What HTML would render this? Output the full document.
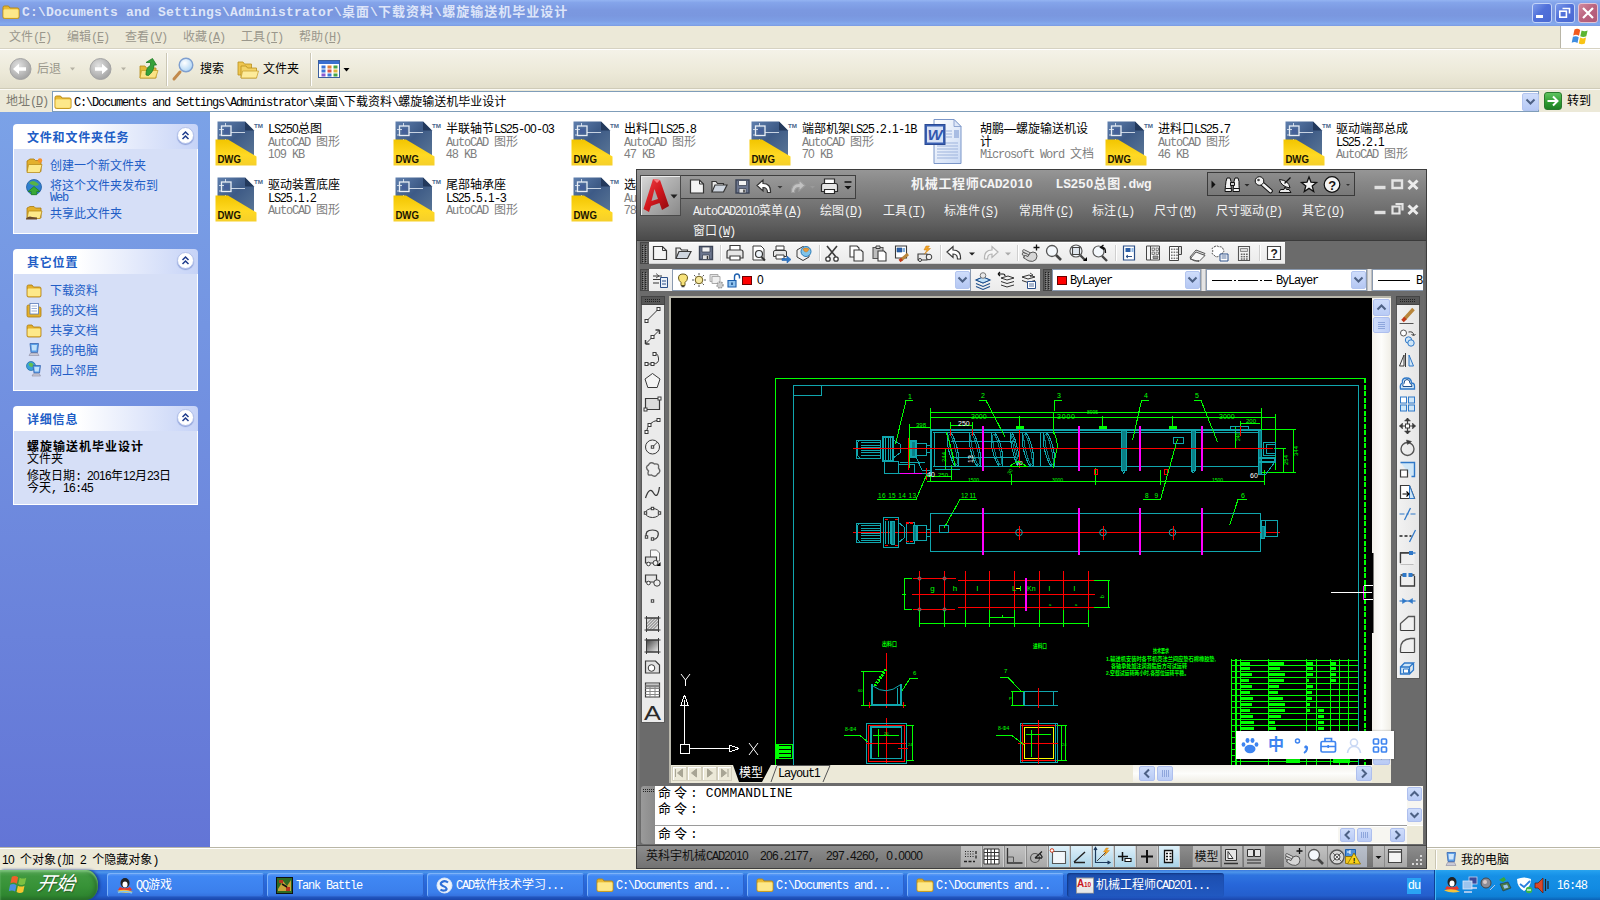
<!DOCTYPE html>
<html lang="zh-CN">
<head>
<meta charset="utf-8">
<title>螺旋输送机毕业设计</title>
<style>
*{box-sizing:border-box;margin:0;padding:0}
html,body{width:1600px;height:900px;overflow:hidden;background:#fff}
body{font-family:"Liberation Sans","Noto Sans CJK SC",sans-serif;font-size:12px;color:#000;position:relative;line-height:14px}
.a{position:absolute}
.t{position:absolute;white-space:pre;line-height:14px}
.m{font-family:"Liberation Mono","Noto Sans CJK SC",monospace}
.d{font-family:"Liberation Sans","Noto Sans CJK SC",sans-serif}
u{text-decoration:underline;text-underline-offset:1px}
svg{position:absolute;overflow:visible}
svg text{font-family:"Liberation Sans","Noto Sans CJK SC",sans-serif}
/* explorer */
#xtitle{left:0;top:0;width:1600px;height:26px;background:linear-gradient(#94b4f2 0,#84a4ea 10%,#7b98e0 40%,#7a97df 60%,#7d9ee5 80%,#84aaee 92%,#7b9ae2 100%)}
.cb{position:absolute;top:3px;width:20px;height:20px;border:1px solid #c3d4f8;border-radius:3px;background:linear-gradient(135deg,#7d9bea 0,#5171da 45%,#4a69d2 100%)}
#xmenu{left:0;top:26px;width:1600px;height:23px;background:#ece9d8;border-bottom:1px solid #d6d2c2}
#xflag{left:1560px;top:26px;width:40px;height:22px;background:#fff;border-left:1px solid #b8b5a6}
#xtool{left:0;top:49px;width:1600px;height:40px;background:linear-gradient(#f4f2e8,#ece9d8 60%,#e3dfcc);border-top:1px solid #fff;border-bottom:1px solid #cfcbb8}
#xaddr{left:0;top:89px;width:1600px;height:23px;background:#ece9d8;border-top:1px solid #fbfaf5}
#xaddrbox{left:52px;top:91px;width:1487px;height:21px;background:#fff;border:1px solid #7f9db9}
#xleft{left:0;top:112px;width:210px;height:735px;background:linear-gradient(#7ba2e7,#6375d6)}
#xmain{left:210px;top:112px;width:1390px;height:735px;background:#fff}
#xstatus{left:0;top:847px;width:1600px;height:23px;background:#ece9d8;border-top:1px solid #b9b6a6;box-shadow:inset 0 1px 0 #fff}
/* task panes */
.ph{position:absolute;left:13px;width:185px;height:25px;border-radius:4px 4px 0 0;background:linear-gradient(90deg,#fff 0,#fff 35%,#c6d3f7 100%)}
.pb{position:absolute;left:13px;width:185px;background:#d6dff7;border:1px solid #fff;border-top:none}
.chev{position:absolute;left:164px;top:3px;width:17px;height:17px;border-radius:50%;background:#fff;border:1px solid #b4c2ea;box-shadow:0 1px 1px #8ea1d9}
/* taskbar */
#tb{left:0;top:870px;width:1600px;height:30px;background:linear-gradient(#3a78de 0,#4d96ea 7%,#2e74e0 17%,#2766d9 50%,#245fcd 85%,#1b46ab 100%)}
.tbb{position:absolute;top:873px;height:24px;border-radius:3px;background:linear-gradient(#66a2f7 0,#4088f4 14%,#3b7fec 80%,#336fdd 100%);box-shadow:inset 1px 1px 0 #7db3fa,inset -1px -1px 0 #2c62cb}
.tbb.act{background:linear-gradient(#1b4dab 0,#1e52b6 40%,#2159c1 100%);box-shadow:inset 1px 1px 2px #113682}
#tray{left:1434px;top:870px;width:166px;height:30px;background:linear-gradient(#2aa4ee 0,#1f9bed 8%,#1690e6 20%,#128be2 60%,#0f80d6 88%,#0b62b6 100%);border-left:1px solid #0e3f94;box-shadow:inset 1px 0 0 #45b8f5}
</style>
</head>
<body>
<!-- explorer -->
<div class="a" id="xtitle"></div>
<svg style="left:2px;top:4px" width="18" height="16" viewBox="0 0 18 16"><path d="M1 3.5Q1 2 2.5 2H6.5L8 4H15.5Q17 4 17 5.5V13Q17 14.5 15.5 14.5H2.5Q1 14.5 1 13Z" fill="#e8b830" stroke="#b98a14" stroke-width="1"/><path d="M1.6 6.5Q1.6 5.3 3 5.3H15Q16.4 5.3 16.4 6.5V12.8Q16.4 13.9 15 13.9H3Q1.6 13.9 1.6 12.8Z" fill="#fde88a" stroke="#f7d55c" stroke-width=".6"/></svg>
<div class="t" style="left:22px;top:5px;font-size:13px;color:#dde5f9;font-weight:bold;"><span class="m" style="letter-spacing:0.20px">C:\Documents and Settings\Administrator\</span><span style="letter-spacing:1.00px">桌面</span><span class="m" style="letter-spacing:0.20px">\</span><span style="letter-spacing:1.00px">下载资料</span><span class="m" style="letter-spacing:0.20px">\</span><span style="letter-spacing:1.00px">螺旋输送机毕业设计</span></div>
<div class="cb" style="left:1532px"></div><div class="cb" style="left:1555px"></div><div class="cb" style="left:1578px;background:linear-gradient(135deg,#d28a9e 0,#b9627e 50%,#b05a78 100%);border-color:#e3c3d3"></div>
<svg style="left:0;top:0" width="1600" height="26" viewBox="0 0 1600 26"><rect x="1536" y="15" width="7" height="3" fill="#fff"/><path d="M1562.5 8.5h7v5" fill="none" stroke="#fff" stroke-width="1.6"/><rect x="1559.8" y="11.2" width="6.6" height="6" fill="none" stroke="#fff" stroke-width="1.6"/><path d="M1583 8l10 10M1593 8l-10 10" stroke="#fff" stroke-width="2.2"/></svg>
<div class="a" id="xmenu"></div>
<div class="t" style="left:9px;top:30px;color:#9a978c;">文件<span class="m" style="letter-spacing:-1.20px">(<u>F</u>)</span></div>
<div class="t" style="left:67px;top:30px;color:#9a978c;">编辑<span class="m" style="letter-spacing:-1.20px">(<u>E</u>)</span></div>
<div class="t" style="left:125px;top:30px;color:#9a978c;">查看<span class="m" style="letter-spacing:-1.20px">(<u>V</u>)</span></div>
<div class="t" style="left:183px;top:30px;color:#9a978c;">收藏<span class="m" style="letter-spacing:-1.20px">(<u>A</u>)</span></div>
<div class="t" style="left:241px;top:30px;color:#9a978c;">工具<span class="m" style="letter-spacing:-1.20px">(<u>T</u>)</span></div>
<div class="t" style="left:299px;top:30px;color:#9a978c;">帮助<span class="m" style="letter-spacing:-1.20px">(<u>H</u>)</span></div>
<div class="a" id="xflag"></div>
<svg style="left:1571px;top:27px" width="20" height="20" viewBox="0 0 20 20"><path d="M3.5 2.5Q6.5 1 9.2 3L8 8.8Q5.2 7 2.2 8.5Z" fill="#f25a1d"/><path d="M10.6 3.4Q13.5 5 16.6 3.4L15.3 9.2Q12.2 10.8 9.3 9.2Z" fill="#5cb531"/><path d="M1.9 9.8Q5 8.3 7.7 10.2L6.5 16Q3.6 14.2 .7 15.7Z" fill="#3f8de0"/><path d="M9 10.6Q12 12.2 15 10.6L13.8 16.4Q10.8 18 7.8 16.4Z" fill="#f9c414"/></svg>
<div class="a" id="xtool"></div>
<svg style="left:0;top:49px" width="420" height="40" viewBox="0 49 420 40"><defs><radialGradient id="gb" cx=".4" cy=".35" r=".7"><stop offset="0" stop-color="#e2e2e2"/><stop offset="1" stop-color="#9e9e9e"/></radialGradient><radialGradient id="lens" cx=".4" cy=".35" r=".7"><stop offset="0" stop-color="#fff"/><stop offset="1" stop-color="#a9d2f5"/></radialGradient></defs><circle cx="20.5" cy="69" r="10.5" fill="url(#gb)" stroke="#a4a4a4"/><path d="M26 67.2h-7v-3.4l-6 5.2 6 5.2v-3.4h7z" fill="#fff"/><path d="M70 67.5h5l-2.5 3z" fill="#b5b2a4"/><circle cx="100.5" cy="69" r="10.5" fill="url(#gb)" stroke="#a4a4a4"/><path d="M95 67.2h7v-3.4l6 5.2-6 5.2v-3.4h-7z" fill="#fff"/><path d="M121 67.5h5l-2.5 3z" fill="#b5b2a4"/><path d="M140 66h5l1.5 2h9.5v10h-16z" fill="#e6b93a" stroke="#b48a1a" stroke-width=".8"/><path d="M141.5 70.5h16.5l-2.5 7.5h-15.5z" fill="#fbe385" stroke="#c79f2a" stroke-width=".8"/><path d="M146 73c0-6 2-8.5 4.5-9.5v-3l-4.5 0 6.500-4 4 6.500h-2.500c0 5-2.500 8-5.500 10.500z" transform="translate(0 2)" fill="#36a23a" stroke="#1f7a25" stroke-width=".8"/><path d="M166.500 53v33" stroke="#cbc7b5"/><path d="M167.500 53v33" stroke="#fff"/><path d="M174 79l6-7" stroke="#c28a4c" stroke-width="3" stroke-linecap="round"/><circle cx="186" cy="65" r="6.8" fill="url(#lens)" stroke="#7f9fcf" stroke-width="1.4"/><path d="M238 62h5l1.500 2h7v11h-13.500z" fill="#eec650" stroke="#b9901f" stroke-width=".8"/><path d="M241 66h5l1.500 2h9v10h-15.500z" fill="#f3d367" stroke="#b9901f" stroke-width=".8"/><path d="M242.500 71h16l-2 7h-15.500z" fill="#fdeb9b" stroke="#c9a232" stroke-width=".8"/><path d="M310.500 53v33" stroke="#cbc7b5"/><path d="M311.500 53v33" stroke="#fff"/><rect x="318.500" y="60.500" width="21" height="17" fill="#fff" stroke="#3b5f9e"/><rect x="319" y="61" width="20" height="3" fill="#3a6fd0"/><rect x="321.5" y="65.5" width="4" height="3" fill="#3d76d8"/><rect x="327.5" y="65.5" width="4" height="3" fill="#e2803a"/><rect x="333.5" y="65.5" width="4" height="3" fill="#47a447"/><rect x="321.5" y="69.5" width="4" height="3" fill="#3d76d8"/><rect x="327.5" y="69.5" width="4" height="3" fill="#d9534f"/><rect x="333.5" y="69.5" width="4" height="3" fill="#e2b53a"/><rect x="321.5" y="73.5" width="4" height="3" fill="#8a5ad0"/><rect x="327.5" y="73.5" width="4" height="3" fill="#3d76d8"/><rect x="333.5" y="73.5" width="4" height="3" fill="#47a447"/><path d="M343.500 68h6l-3 3.500z" fill="#000"/></svg>
<div class="t" style="left:37px;top:62px;color:#9a978c;">后退</div>
<div class="t" style="left:200px;top:62px;">搜索</div>
<div class="t" style="left:263px;top:62px;">文件夹</div>
<div class="a" id="xaddr"></div><div class="a" id="xaddrbox"></div>
<div class="t" style="left:6px;top:94px;color:#7b796f;">地址<span class="m" style="letter-spacing:-1.20px">(<u>D</u>)</span></div>
<svg style="left:54px;top:93.5px" width="18" height="16" viewBox="0 0 18 16"><path d="M1 3.5Q1 2 2.5 2H6.5L8 4H15.5Q17 4 17 5.5V13Q17 14.5 15.5 14.5H2.5Q1 14.5 1 13Z" fill="#e8b830" stroke="#b98a14" stroke-width="1"/><path d="M1.6 6.5Q1.6 5.3 3 5.3H15Q16.4 5.3 16.4 6.5V12.8Q16.4 13.9 15 13.9H3Q1.6 13.9 1.6 12.8Z" fill="#fde88a" stroke="#f7d55c" stroke-width=".6"/></svg>
<div class="t" style="left:74px;top:95px;"><span class="m" style="letter-spacing:-1.20px">C:\Documents and Settings\Administrator\</span>桌面<span class="m" style="letter-spacing:-1.20px">\</span>下载资料<span class="m" style="letter-spacing:-1.20px">\</span>螺旋输送机毕业设计</div>
<div class="a" style="left:1522px;top:92.5px;width:17px;height:18px;background:linear-gradient(#cfddfb,#b6c9f5);border:1px solid #b3c5ef;border-radius:2px"></div>
<svg style="left:1522px;top:92px" width="17" height="19" viewBox="0 0 17 19"><path d="M4.500 7.500l4 4 4-4" fill="none" stroke="#4d6185" stroke-width="2"/></svg>
<div class="a" style="left:1544px;top:92px;width:18px;height:18px;background:linear-gradient(#5fc35f,#2d9a30 60%,#1f7f26);border:1px solid #2a7a2d;border-radius:3px"></div>
<svg style="left:1544px;top:92px" width="18" height="18" viewBox="0 0 18 18"><path d="M3.500 9h9M9 4.500l4.500 4.500-4.500 4.500" fill="none" stroke="#fff" stroke-width="2"/></svg>
<div class="t" style="left:1567px;top:94px;">转到</div>
<div class="a" id="xleft"></div><div class="a" id="xmain"></div><div class="a" id="xstatus"></div>
<div class="t" style="left:2px;top:852.5px;"><span class="d" style="letter-spacing:-0.67px">10</span><span class="m" style="letter-spacing:-1.20px"> </span>个对象<span class="m" style="letter-spacing:-1.20px">(</span>加<span class="m" style="letter-spacing:-1.20px"> </span><span class="d" style="letter-spacing:-0.67px">2</span><span class="m" style="letter-spacing:-1.20px"> </span>个隐藏对象<span class="m" style="letter-spacing:-1.20px">)</span></div>
<!-- leftpane -->
<div class="ph" style="top:124px"><div class="chev"><svg style="left:0;top:0" width="15" height="15" viewBox="0 0 15 15"><path d="M4.500 7l3-3 3 3M4.500 11l3-3 3 3" fill="none" stroke="#1f3c8c" stroke-width="1.500"/></svg></div></div>
<div class="pb" style="top:149px;height:85px"></div>
<div class="t" style="left:27px;top:130.5px;color:#215dc6;font-weight:bold;"><span style="letter-spacing:0.80px">文件和文件夹任务</span></div>
<div class="t" style="left:50px;top:158.5px;color:#215dc6;">创建一个新文件夹</div>
<div class="t" style="left:50px;top:178.5px;color:#215dc6;">将这个文件夹发布到</div>
<div class="t" style="left:50px;top:190px;color:#215dc6;"><span class="m" style="letter-spacing:-1.20px">Web</span></div>
<div class="t" style="left:50px;top:206.5px;color:#215dc6;">共享此文件夹</div>
<div class="ph" style="top:249px"><div class="chev"><svg style="left:0;top:0" width="15" height="15" viewBox="0 0 15 15"><path d="M4.500 7l3-3 3 3M4.500 11l3-3 3 3" fill="none" stroke="#1f3c8c" stroke-width="1.500"/></svg></div></div>
<div class="pb" style="top:274px;height:117px"></div>
<div class="t" style="left:27px;top:255.5px;color:#215dc6;font-weight:bold;"><span style="letter-spacing:0.80px">其它位置</span></div>
<div class="t" style="left:50px;top:283.5px;color:#215dc6;">下载资料</div>
<div class="t" style="left:50px;top:303.5px;color:#215dc6;">我的文档</div>
<div class="t" style="left:50px;top:323.5px;color:#215dc6;">共享文档</div>
<div class="t" style="left:50px;top:343.5px;color:#215dc6;">我的电脑</div>
<div class="t" style="left:50px;top:363.5px;color:#215dc6;">网上邻居</div>
<div class="ph" style="top:406px"><div class="chev"><svg style="left:0;top:0" width="15" height="15" viewBox="0 0 15 15"><path d="M4.500 7l3-3 3 3M4.500 11l3-3 3 3" fill="none" stroke="#1f3c8c" stroke-width="1.500"/></svg></div></div>
<div class="pb" style="top:431px;height:74px"></div>
<div class="t" style="left:27px;top:413px;color:#215dc6;font-weight:bold;"><span style="letter-spacing:0.80px">详细信息</span></div>
<div class="t" style="left:27px;top:439.5px;font-weight:bold;"><span style="letter-spacing:1.00px">螺旋输送机毕业设计</span></div>
<div class="t" style="left:27px;top:452px;">文件夹</div>
<div class="t" style="left:27px;top:468.5px;">修改日期<span class="m" style="letter-spacing:-1.20px">: </span><span class="d" style="letter-spacing:-0.67px">2016</span>年<span class="d" style="letter-spacing:-0.67px">12</span>月<span class="d" style="letter-spacing:-0.67px">23</span>日</div>
<div class="t" style="left:27px;top:481px;">今天<span class="m" style="letter-spacing:-1.20px">, </span><span class="d" style="letter-spacing:-0.67px">16</span><span class="m" style="letter-spacing:-1.20px">:</span><span class="d" style="letter-spacing:-0.67px">45</span></div>
<svg style="left:0;top:0" width="210" height="520" viewBox="0 0 210 520"><path d="M27 161l3-2h4l1.500 1.500h5.500v11h-14z" fill="#e3b02c" stroke="#a97a10" stroke-width=".8"/><path d="M28.500 164.500h13.500l-2 8h-13z" fill="#fde98a" stroke="#b98d1c" stroke-width=".8"/><circle cx="40" cy="160.500" r="2.200" fill="#f8912a"/><circle cx="34" cy="187" r="7.500" fill="#2f7fd0" stroke="#1d5aa0" stroke-width=".8"/><path d="M29 183q3-3 6-1.500t4 3q-2 2-5 1t-5-2.500z" fill="#58b347"/><path d="M34 186.500l6 5h-3.200v3.200h-5.600v-3.200h-3.200z" fill="#39a935" stroke="#1f7a1f" stroke-width=".7"/><path d="M27 208l3-1.500h4l1.500 1.500h5.500v10h-14z" fill="#e3b02c" stroke="#a97a10" stroke-width=".8"/><path d="M28.500 211h13.500l-2 7.500h-13z" fill="#fde98a" stroke="#b98d1c" stroke-width=".8"/><path d="M26 218.500q3-3 6-1.500l5 .5v2h-11z" fill="#6a4a2a"/><path d="M27 286.500q0-1.500 1.500-1.500h3.500l1.500 2h6q1.500 0 1.500 1.500v7q0 1.500-1.500 1.500h-11q-1.500 0-1.500-1.500z" fill="#e3b02c" stroke="#a97a10" stroke-width=".8"/><rect x="27.600" y="288.500" width="12.800" height="7.800" rx="1.200" fill="#fde98a"/><path d="M27 306.500q0-1.500 1.500-1.500h3.500l1.500 2h6q1.500 0 1.500 1.500v7q0 1.500-1.500 1.500h-11q-1.500 0-1.500-1.500z" fill="#e3b02c" stroke="#a97a10" stroke-width=".8"/><rect x="30" y="303.500" width="8.500" height="10.500" fill="#fff" stroke="#5a7ab8" stroke-width=".8"/><path d="M31.500 306h5.500M31.500 308.500h5.500M31.500 311h5.500" stroke="#7d9ad0" stroke-width=".8"/><path d="M27 326.500q0-1.500 1.500-1.500h3.500l1.500 2h6q1.500 0 1.500 1.500v7q0 1.500-1.500 1.500h-11q-1.500 0-1.500-1.500z" fill="#e3b02c" stroke="#a97a10" stroke-width=".8"/><rect x="27.600" y="328.500" width="12.800" height="7.800" rx="1.200" fill="#fde98a"/><path d="M30 343.500h8.500l-1 9h-6.500z" fill="#5aa0e8" stroke="#3a66b0" stroke-width=".8"/><path d="M31.500 345h5.500l-.7 5.500h-4.300z" fill="#bfe0fb"/><path d="M29 355.500h10l-1.500-2.500h-7z" fill="#c9c9d6" stroke="#8a8aa0" stroke-width=".6"/><circle cx="31" cy="366" r="4.500" fill="#3aa0d8" stroke="#1f6aa0" stroke-width=".7"/><path d="M28.500 364q2-2 4-.5t1 3q-2 1-4-.5z" fill="#62c050"/><path d="M33 365.500h7.500l-1 7.500h-5.500z" fill="#5aa0e8" stroke="#3a66b0" stroke-width=".8"/><path d="M34.300 367h5l-.6 4.500h-3.800z" fill="#bfe0fb"/><path d="M32 376h8.500l-1.200-2.200h-6z" fill="#c9c9d6" stroke="#8a8aa0" stroke-width=".6"/></svg>
<!-- files -->
<svg style="left:215px;top:120px" width="50" height="48" viewBox="0 0 50 48"><defs><linearGradient id="dwgb" x1="0" y1="0" x2="1" y2="1"><stop offset="0" stop-color="#5f7fae"/><stop offset=".45" stop-color="#3d5a86"/><stop offset="1" stop-color="#5c7897"/></linearGradient><linearGradient id="dwgy" x1="0" y1="0" x2="0" y2="1"><stop offset="0" stop-color="#f2c500"/><stop offset=".6" stop-color="#ffd923"/><stop offset="1" stop-color="#f5cf2a"/></linearGradient></defs><path d="M2.500 1.500H30L39 10.500V40H2.500Z" fill="url(#dwgb)"/><path d="M30 1.500L39 10.500H30Z" fill="#23395c"/><path d="M4 9.500h6M10.500 3v3M4 15h3M10.500 19v7M16 12.500h14" stroke="#dfe7f2" stroke-width="1" fill="none" opacity=".85"/><rect x="6.500" y="6" width="9.500" height="9.500" fill="none" stroke="#e9eef6" stroke-width="1.300"/><rect x="9" y="8.500" width="5" height="5" fill="#45609a"/><path d="M.500 19.500H13L41.500 36.500V45.500H.500Z" fill="url(#dwgy)"/><text x="2.400" y="43" font-size="11" font-weight="bold" fill="#1a1400" textLength="23.500" lengthAdjust="spacingAndGlyphs">DWG</text><text x="39" y="7.500" font-size="6" font-weight="bold" fill="#46648a" textLength="9" lengthAdjust="spacingAndGlyphs">TM</text></svg>
<div class="t" style="left:268px;top:122px;"><span class="m" style="letter-spacing:-1.20px">LS</span><span class="d" style="letter-spacing:-0.67px">250</span>总图</div>
<div class="t" style="left:268px;top:134.5px;color:#808080;"><span class="m" style="letter-spacing:-1.20px">AutoCAD </span>图形</div>
<div class="t" style="left:268px;top:147px;color:#808080;"><span class="d" style="letter-spacing:-0.67px">109</span><span class="m" style="letter-spacing:-1.20px"> KB</span></div>
<svg style="left:393px;top:120px" width="50" height="48" viewBox="0 0 50 48"><defs><linearGradient id="dwgb" x1="0" y1="0" x2="1" y2="1"><stop offset="0" stop-color="#5f7fae"/><stop offset=".45" stop-color="#3d5a86"/><stop offset="1" stop-color="#5c7897"/></linearGradient><linearGradient id="dwgy" x1="0" y1="0" x2="0" y2="1"><stop offset="0" stop-color="#f2c500"/><stop offset=".6" stop-color="#ffd923"/><stop offset="1" stop-color="#f5cf2a"/></linearGradient></defs><path d="M2.500 1.500H30L39 10.500V40H2.500Z" fill="url(#dwgb)"/><path d="M30 1.500L39 10.500H30Z" fill="#23395c"/><path d="M4 9.500h6M10.500 3v3M4 15h3M10.500 19v7M16 12.500h14" stroke="#dfe7f2" stroke-width="1" fill="none" opacity=".85"/><rect x="6.500" y="6" width="9.500" height="9.500" fill="none" stroke="#e9eef6" stroke-width="1.300"/><rect x="9" y="8.500" width="5" height="5" fill="#45609a"/><path d="M.500 19.500H13L41.500 36.500V45.500H.500Z" fill="url(#dwgy)"/><text x="2.400" y="43" font-size="11" font-weight="bold" fill="#1a1400" textLength="23.500" lengthAdjust="spacingAndGlyphs">DWG</text><text x="39" y="7.500" font-size="6" font-weight="bold" fill="#46648a" textLength="9" lengthAdjust="spacingAndGlyphs">TM</text></svg>
<div class="t" style="left:446px;top:122px;">半联轴节<span class="m" style="letter-spacing:-1.20px">LS</span><span class="d" style="letter-spacing:-0.67px">25</span><span class="m" style="letter-spacing:-1.20px">-</span><span class="d" style="letter-spacing:-0.67px">00</span><span class="m" style="letter-spacing:-1.20px">-</span><span class="d" style="letter-spacing:-0.67px">03</span></div>
<div class="t" style="left:446px;top:134.5px;color:#808080;"><span class="m" style="letter-spacing:-1.20px">AutoCAD </span>图形</div>
<div class="t" style="left:446px;top:147px;color:#808080;"><span class="d" style="letter-spacing:-0.67px">48</span><span class="m" style="letter-spacing:-1.20px"> KB</span></div>
<svg style="left:571px;top:120px" width="50" height="48" viewBox="0 0 50 48"><defs><linearGradient id="dwgb" x1="0" y1="0" x2="1" y2="1"><stop offset="0" stop-color="#5f7fae"/><stop offset=".45" stop-color="#3d5a86"/><stop offset="1" stop-color="#5c7897"/></linearGradient><linearGradient id="dwgy" x1="0" y1="0" x2="0" y2="1"><stop offset="0" stop-color="#f2c500"/><stop offset=".6" stop-color="#ffd923"/><stop offset="1" stop-color="#f5cf2a"/></linearGradient></defs><path d="M2.500 1.500H30L39 10.500V40H2.500Z" fill="url(#dwgb)"/><path d="M30 1.500L39 10.500H30Z" fill="#23395c"/><path d="M4 9.500h6M10.500 3v3M4 15h3M10.500 19v7M16 12.500h14" stroke="#dfe7f2" stroke-width="1" fill="none" opacity=".85"/><rect x="6.500" y="6" width="9.500" height="9.500" fill="none" stroke="#e9eef6" stroke-width="1.300"/><rect x="9" y="8.500" width="5" height="5" fill="#45609a"/><path d="M.500 19.500H13L41.500 36.500V45.500H.500Z" fill="url(#dwgy)"/><text x="2.400" y="43" font-size="11" font-weight="bold" fill="#1a1400" textLength="23.500" lengthAdjust="spacingAndGlyphs">DWG</text><text x="39" y="7.500" font-size="6" font-weight="bold" fill="#46648a" textLength="9" lengthAdjust="spacingAndGlyphs">TM</text></svg>
<div class="t" style="left:624px;top:122px;">出料口<span class="m" style="letter-spacing:-1.20px">LS</span><span class="d" style="letter-spacing:-0.67px">25</span><span class="m" style="letter-spacing:-1.20px">.</span><span class="d" style="letter-spacing:-0.67px">8</span></div>
<div class="t" style="left:624px;top:134.5px;color:#808080;"><span class="m" style="letter-spacing:-1.20px">AutoCAD </span>图形</div>
<div class="t" style="left:624px;top:147px;color:#808080;"><span class="d" style="letter-spacing:-0.67px">47</span><span class="m" style="letter-spacing:-1.20px"> KB</span></div>
<svg style="left:749px;top:120px" width="50" height="48" viewBox="0 0 50 48"><defs><linearGradient id="dwgb" x1="0" y1="0" x2="1" y2="1"><stop offset="0" stop-color="#5f7fae"/><stop offset=".45" stop-color="#3d5a86"/><stop offset="1" stop-color="#5c7897"/></linearGradient><linearGradient id="dwgy" x1="0" y1="0" x2="0" y2="1"><stop offset="0" stop-color="#f2c500"/><stop offset=".6" stop-color="#ffd923"/><stop offset="1" stop-color="#f5cf2a"/></linearGradient></defs><path d="M2.500 1.500H30L39 10.500V40H2.500Z" fill="url(#dwgb)"/><path d="M30 1.500L39 10.500H30Z" fill="#23395c"/><path d="M4 9.500h6M10.500 3v3M4 15h3M10.500 19v7M16 12.500h14" stroke="#dfe7f2" stroke-width="1" fill="none" opacity=".85"/><rect x="6.500" y="6" width="9.500" height="9.500" fill="none" stroke="#e9eef6" stroke-width="1.300"/><rect x="9" y="8.500" width="5" height="5" fill="#45609a"/><path d="M.500 19.500H13L41.500 36.500V45.500H.500Z" fill="url(#dwgy)"/><text x="2.400" y="43" font-size="11" font-weight="bold" fill="#1a1400" textLength="23.500" lengthAdjust="spacingAndGlyphs">DWG</text><text x="39" y="7.500" font-size="6" font-weight="bold" fill="#46648a" textLength="9" lengthAdjust="spacingAndGlyphs">TM</text></svg>
<div class="t" style="left:802px;top:122px;">端部机架<span class="m" style="letter-spacing:-1.20px">LS</span><span class="d" style="letter-spacing:-0.67px">25</span><span class="m" style="letter-spacing:-1.20px">.</span><span class="d" style="letter-spacing:-0.67px">2</span><span class="m" style="letter-spacing:-1.20px">.</span><span class="d" style="letter-spacing:-0.67px">1</span><span class="m" style="letter-spacing:-1.20px">-</span><span class="d" style="letter-spacing:-0.67px">1</span><span class="m" style="letter-spacing:-1.20px">B</span></div>
<div class="t" style="left:802px;top:134.5px;color:#808080;"><span class="m" style="letter-spacing:-1.20px">AutoCAD </span>图形</div>
<div class="t" style="left:802px;top:147px;color:#808080;"><span class="d" style="letter-spacing:-0.67px">70</span><span class="m" style="letter-spacing:-1.20px"> KB</span></div>
<svg style="left:924px;top:118px" width="50" height="48" viewBox="0 0 50 48"><defs><linearGradient id="wpg" x1="0" y1="0" x2="1" y2="1"><stop offset="0" stop-color="#fff"/><stop offset="1" stop-color="#c9d9f4"/></linearGradient></defs><path d="M10 1.500H30L37 8.500V45.500H10Z" fill="url(#wpg)" stroke="#7b96c8" stroke-width="1"/><path d="M30 1.500V8.500H37Z" fill="#dfe8f8" stroke="#7b96c8" stroke-width=".8"/><path d="M22 13h6M22 16h6M22 19h6M13 28h21M13 31h21M13 34h21M13 37h21M13 40h21M13 25h21" stroke="#9db3dc" stroke-width="1"/><rect x="30" y="12" width="5" height="8" fill="#a9bde3"/><rect x="1" y="6.500" width="20" height="20" fill="#3a60b4" stroke="#2a4a94" stroke-width="1"/><rect x="3" y="8.500" width="16" height="16" fill="#d7e2f6"/><text x="3.500" y="22" font-size="15" font-weight="bold" font-style="italic" fill="#3358ae" textLength="15" lengthAdjust="spacingAndGlyphs">W</text></svg>
<div class="t" style="left:980px;top:122px;">胡鹏—螺旋输送机设</div>
<div class="t" style="left:980px;top:134.5px;">计</div>
<div class="t" style="left:980px;top:147px;color:#808080;"><span class="m" style="letter-spacing:-1.20px">Microsoft Word </span>文档</div>
<svg style="left:1105px;top:120px" width="50" height="48" viewBox="0 0 50 48"><defs><linearGradient id="dwgb" x1="0" y1="0" x2="1" y2="1"><stop offset="0" stop-color="#5f7fae"/><stop offset=".45" stop-color="#3d5a86"/><stop offset="1" stop-color="#5c7897"/></linearGradient><linearGradient id="dwgy" x1="0" y1="0" x2="0" y2="1"><stop offset="0" stop-color="#f2c500"/><stop offset=".6" stop-color="#ffd923"/><stop offset="1" stop-color="#f5cf2a"/></linearGradient></defs><path d="M2.500 1.500H30L39 10.500V40H2.500Z" fill="url(#dwgb)"/><path d="M30 1.500L39 10.500H30Z" fill="#23395c"/><path d="M4 9.500h6M10.500 3v3M4 15h3M10.500 19v7M16 12.500h14" stroke="#dfe7f2" stroke-width="1" fill="none" opacity=".85"/><rect x="6.500" y="6" width="9.500" height="9.500" fill="none" stroke="#e9eef6" stroke-width="1.300"/><rect x="9" y="8.500" width="5" height="5" fill="#45609a"/><path d="M.500 19.500H13L41.500 36.500V45.500H.500Z" fill="url(#dwgy)"/><text x="2.400" y="43" font-size="11" font-weight="bold" fill="#1a1400" textLength="23.500" lengthAdjust="spacingAndGlyphs">DWG</text><text x="39" y="7.500" font-size="6" font-weight="bold" fill="#46648a" textLength="9" lengthAdjust="spacingAndGlyphs">TM</text></svg>
<div class="t" style="left:1158px;top:122px;">进料口<span class="m" style="letter-spacing:-1.20px">LS</span><span class="d" style="letter-spacing:-0.67px">25</span><span class="m" style="letter-spacing:-1.20px">.</span><span class="d" style="letter-spacing:-0.67px">7</span></div>
<div class="t" style="left:1158px;top:134.5px;color:#808080;"><span class="m" style="letter-spacing:-1.20px">AutoCAD </span>图形</div>
<div class="t" style="left:1158px;top:147px;color:#808080;"><span class="d" style="letter-spacing:-0.67px">46</span><span class="m" style="letter-spacing:-1.20px"> KB</span></div>
<svg style="left:1283px;top:120px" width="50" height="48" viewBox="0 0 50 48"><defs><linearGradient id="dwgb" x1="0" y1="0" x2="1" y2="1"><stop offset="0" stop-color="#5f7fae"/><stop offset=".45" stop-color="#3d5a86"/><stop offset="1" stop-color="#5c7897"/></linearGradient><linearGradient id="dwgy" x1="0" y1="0" x2="0" y2="1"><stop offset="0" stop-color="#f2c500"/><stop offset=".6" stop-color="#ffd923"/><stop offset="1" stop-color="#f5cf2a"/></linearGradient></defs><path d="M2.500 1.500H30L39 10.500V40H2.500Z" fill="url(#dwgb)"/><path d="M30 1.500L39 10.500H30Z" fill="#23395c"/><path d="M4 9.500h6M10.500 3v3M4 15h3M10.500 19v7M16 12.500h14" stroke="#dfe7f2" stroke-width="1" fill="none" opacity=".85"/><rect x="6.500" y="6" width="9.500" height="9.500" fill="none" stroke="#e9eef6" stroke-width="1.300"/><rect x="9" y="8.500" width="5" height="5" fill="#45609a"/><path d="M.500 19.500H13L41.500 36.500V45.500H.500Z" fill="url(#dwgy)"/><text x="2.400" y="43" font-size="11" font-weight="bold" fill="#1a1400" textLength="23.500" lengthAdjust="spacingAndGlyphs">DWG</text><text x="39" y="7.500" font-size="6" font-weight="bold" fill="#46648a" textLength="9" lengthAdjust="spacingAndGlyphs">TM</text></svg>
<div class="t" style="left:1336px;top:122px;">驱动端部总成</div>
<div class="t" style="left:1336px;top:134.5px;"><span class="m" style="letter-spacing:-1.20px">LS</span><span class="d" style="letter-spacing:-0.67px">25</span><span class="m" style="letter-spacing:-1.20px">.</span><span class="d" style="letter-spacing:-0.67px">2</span><span class="m" style="letter-spacing:-1.20px">.</span><span class="d" style="letter-spacing:-0.67px">1</span></div>
<div class="t" style="left:1336px;top:147px;color:#808080;"><span class="m" style="letter-spacing:-1.20px">AutoCAD </span>图形</div>
<svg style="left:215px;top:176px" width="50" height="48" viewBox="0 0 50 48"><defs><linearGradient id="dwgb" x1="0" y1="0" x2="1" y2="1"><stop offset="0" stop-color="#5f7fae"/><stop offset=".45" stop-color="#3d5a86"/><stop offset="1" stop-color="#5c7897"/></linearGradient><linearGradient id="dwgy" x1="0" y1="0" x2="0" y2="1"><stop offset="0" stop-color="#f2c500"/><stop offset=".6" stop-color="#ffd923"/><stop offset="1" stop-color="#f5cf2a"/></linearGradient></defs><path d="M2.500 1.500H30L39 10.500V40H2.500Z" fill="url(#dwgb)"/><path d="M30 1.500L39 10.500H30Z" fill="#23395c"/><path d="M4 9.500h6M10.500 3v3M4 15h3M10.500 19v7M16 12.500h14" stroke="#dfe7f2" stroke-width="1" fill="none" opacity=".85"/><rect x="6.500" y="6" width="9.500" height="9.500" fill="none" stroke="#e9eef6" stroke-width="1.300"/><rect x="9" y="8.500" width="5" height="5" fill="#45609a"/><path d="M.500 19.500H13L41.500 36.500V45.500H.500Z" fill="url(#dwgy)"/><text x="2.400" y="43" font-size="11" font-weight="bold" fill="#1a1400" textLength="23.500" lengthAdjust="spacingAndGlyphs">DWG</text><text x="39" y="7.500" font-size="6" font-weight="bold" fill="#46648a" textLength="9" lengthAdjust="spacingAndGlyphs">TM</text></svg>
<div class="t" style="left:268px;top:178px;">驱动装置底座</div>
<div class="t" style="left:268px;top:190.5px;"><span class="m" style="letter-spacing:-1.20px">LS</span><span class="d" style="letter-spacing:-0.67px">25</span><span class="m" style="letter-spacing:-1.20px">.</span><span class="d" style="letter-spacing:-0.67px">1</span><span class="m" style="letter-spacing:-1.20px">.</span><span class="d" style="letter-spacing:-0.67px">2</span></div>
<div class="t" style="left:268px;top:203px;color:#808080;"><span class="m" style="letter-spacing:-1.20px">AutoCAD </span>图形</div>
<svg style="left:393px;top:176px" width="50" height="48" viewBox="0 0 50 48"><defs><linearGradient id="dwgb" x1="0" y1="0" x2="1" y2="1"><stop offset="0" stop-color="#5f7fae"/><stop offset=".45" stop-color="#3d5a86"/><stop offset="1" stop-color="#5c7897"/></linearGradient><linearGradient id="dwgy" x1="0" y1="0" x2="0" y2="1"><stop offset="0" stop-color="#f2c500"/><stop offset=".6" stop-color="#ffd923"/><stop offset="1" stop-color="#f5cf2a"/></linearGradient></defs><path d="M2.500 1.500H30L39 10.500V40H2.500Z" fill="url(#dwgb)"/><path d="M30 1.500L39 10.500H30Z" fill="#23395c"/><path d="M4 9.500h6M10.500 3v3M4 15h3M10.500 19v7M16 12.500h14" stroke="#dfe7f2" stroke-width="1" fill="none" opacity=".85"/><rect x="6.500" y="6" width="9.500" height="9.500" fill="none" stroke="#e9eef6" stroke-width="1.300"/><rect x="9" y="8.500" width="5" height="5" fill="#45609a"/><path d="M.500 19.500H13L41.500 36.500V45.500H.500Z" fill="url(#dwgy)"/><text x="2.400" y="43" font-size="11" font-weight="bold" fill="#1a1400" textLength="23.500" lengthAdjust="spacingAndGlyphs">DWG</text><text x="39" y="7.500" font-size="6" font-weight="bold" fill="#46648a" textLength="9" lengthAdjust="spacingAndGlyphs">TM</text></svg>
<div class="t" style="left:446px;top:178px;">尾部轴承座</div>
<div class="t" style="left:446px;top:190.5px;"><span class="m" style="letter-spacing:-1.20px">LS</span><span class="d" style="letter-spacing:-0.67px">25</span><span class="m" style="letter-spacing:-1.20px">.</span><span class="d" style="letter-spacing:-0.67px">5</span><span class="m" style="letter-spacing:-1.20px">.</span><span class="d" style="letter-spacing:-0.67px">1</span><span class="m" style="letter-spacing:-1.20px">-</span><span class="d" style="letter-spacing:-0.67px">3</span></div>
<div class="t" style="left:446px;top:203px;color:#808080;"><span class="m" style="letter-spacing:-1.20px">AutoCAD </span>图形</div>
<svg style="left:571px;top:176px" width="50" height="48" viewBox="0 0 50 48"><defs><linearGradient id="dwgb" x1="0" y1="0" x2="1" y2="1"><stop offset="0" stop-color="#5f7fae"/><stop offset=".45" stop-color="#3d5a86"/><stop offset="1" stop-color="#5c7897"/></linearGradient><linearGradient id="dwgy" x1="0" y1="0" x2="0" y2="1"><stop offset="0" stop-color="#f2c500"/><stop offset=".6" stop-color="#ffd923"/><stop offset="1" stop-color="#f5cf2a"/></linearGradient></defs><path d="M2.500 1.500H30L39 10.500V40H2.500Z" fill="url(#dwgb)"/><path d="M30 1.500L39 10.500H30Z" fill="#23395c"/><path d="M4 9.500h6M10.500 3v3M4 15h3M10.500 19v7M16 12.500h14" stroke="#dfe7f2" stroke-width="1" fill="none" opacity=".85"/><rect x="6.500" y="6" width="9.500" height="9.500" fill="none" stroke="#e9eef6" stroke-width="1.300"/><rect x="9" y="8.500" width="5" height="5" fill="#45609a"/><path d="M.500 19.500H13L41.500 36.500V45.500H.500Z" fill="url(#dwgy)"/><text x="2.400" y="43" font-size="11" font-weight="bold" fill="#1a1400" textLength="23.500" lengthAdjust="spacingAndGlyphs">DWG</text><text x="39" y="7.500" font-size="6" font-weight="bold" fill="#46648a" textLength="9" lengthAdjust="spacingAndGlyphs">TM</text></svg>
<div class="t" style="left:624px;top:178px;">选型计算</div>
<div class="t" style="left:624px;top:190.5px;color:#808080;"><span class="m" style="letter-spacing:-1.20px">AutoCAD </span>图形</div>
<div class="t" style="left:624px;top:203px;color:#808080;"><span class="d" style="letter-spacing:-0.67px">78</span><span class="m" style="letter-spacing:-1.20px"> KB</span></div>
<!-- taskbar -->
<div class="a" style="left:1435px;top:850px;width:1px;height:19px;background:#c9c5b2"></div>
<div class="a" style="left:1436px;top:850px;width:1px;height:19px;background:#fff"></div>
<svg style="left:1443px;top:851px" width="16" height="17" viewBox="0 0 16 17"><path d="M4 1.500h8.500l-1 9h-6.500z" fill="#5aa0e8" stroke="#3a66b0" stroke-width=".8"/><path d="M5.500 3h5.500l-.7 5.500h-4.300z" fill="#cfe6fb"/><path d="M3 14.500h10l-1.500-3h-7z" fill="#c9c9d6" stroke="#8a8aa0" stroke-width=".6"/></svg>
<div class="t" style="left:1461px;top:852.5px;">我的电脑</div>
<div class="a" id="tb"></div>
<div class="a" style="left:0;top:870px;width:98px;height:30px;border-radius:0 12px 12px 0/0 15px 15px 0;background:linear-gradient(#3f8f3f 0,#52a552 8%,#3f983f 20%,#379237 55%,#2f8630 85%,#266f28 100%);box-shadow:inset 0 2px 2px #7bc47b,inset -3px 0 4px #2a6f2c,2px 0 3px #1a3f98"></div>
<svg style="left:8px;top:874px" width="22" height="22" viewBox="0 0 20 20"><path d="M3.500 2.500Q6.500 1 9.200 3L8 8.800Q5.200 7 2.200 8.500Z" fill="#f0602a"/><path d="M10.600 3.400Q13.500 5 16.600 3.400L15.300 9.200Q12.200 10.800 9.300 9.200Z" fill="#7cc142"/><path d="M1.900 9.800Q5 8.300 7.700 10.200L6.500 16Q3.600 14.200 .7 15.700Z" fill="#4a8fe0"/><path d="M9 10.600Q12 12.200 15 10.600L13.800 16.400Q10.800 18 7.800 16.400Z" fill="#f7c630"/></svg>
<div class="t" style="left:37px;top:872px;font-size:19px;line-height:24px;font-style:italic;color:#fff;text-shadow:1px 1px 1px #2a5a2a;letter-spacing:0px;transform:skewX(-8deg)">开始</div>
<div class="tbb" style="left:107px;width:157px"></div>
<svg style="left:116px;top:877px" width="18" height="17" viewBox="0 0 18 17"><ellipse cx="9" cy="6" rx="4.500" ry="5" fill="#222"/><ellipse cx="9" cy="7.500" rx="2.500" ry="3" fill="#fff"/><path d="M4 10q5 2.500 10 0l2 3q-7 3-14 0z" fill="#e8392b"/><path d="M1 14q8-3 16 1q-8 2.500-16-1z" fill="#f6c33a"/><path d="M2 15.500q7-2 14 .5" stroke="#7fc4f0" stroke-width="1.500" fill="none"/></svg>
<div class="t" style="left:136px;top:878px;color:#fff;"><span class="m" style="letter-spacing:-1.20px">QQ</span>游戏</div>
<div class="tbb" style="left:267px;width:157px"></div>
<svg style="left:276px;top:877px" width="17" height="17" viewBox="0 0 17 17"><rect x=".5" y=".5" width="16" height="16" fill="#2e6a22" stroke="#111"/><path d="M2 12l5-8 4 5 4-6v11h-13z" fill="#c9a43a"/><path d="M3 3h4v3h-4zM10 10h4v4h-4z" fill="#b5361f"/><path d="M6 7l5 3" stroke="#111" stroke-width="1.500"/></svg>
<div class="t" style="left:296px;top:878px;color:#fff;"><span class="m" style="letter-spacing:-1.20px">Tank Battle</span></div>
<div class="tbb" style="left:427px;width:157px"></div>
<svg style="left:436px;top:877px" width="17" height="17" viewBox="0 0 17 17"><circle cx="8.500" cy="8.500" r="7.500" fill="#eef4fc" stroke="#dfe9f7"/><path d="M12 5.500q-3-2.500-6-.5t1 4q3 1 3.500 2.500t-2 2t-4-1" fill="none" stroke="#2d6fd8" stroke-width="2.200"/></svg>
<div class="t" style="left:456px;top:878px;color:#fff;"><span class="m" style="letter-spacing:-1.20px">CAD</span>软件技术学习<span class="m" style="letter-spacing:-1.20px">...</span></div>
<div class="tbb" style="left:587px;width:157px"></div>
<svg style="left:596px;top:877px" width="18" height="16" viewBox="0 0 18 16"><path d="M1 3.5Q1 2 2.5 2H6.5L8 4H15.5Q17 4 17 5.5V13Q17 14.5 15.5 14.5H2.5Q1 14.5 1 13Z" fill="#e8b830" stroke="#b98a14" stroke-width="1"/><path d="M1.6 6.5Q1.6 5.3 3 5.3H15Q16.4 5.3 16.4 6.5V12.8Q16.4 13.9 15 13.9H3Q1.6 13.9 1.6 12.8Z" fill="#fde88a" stroke="#f7d55c" stroke-width=".6"/></svg>
<div class="t" style="left:616px;top:878px;color:#fff;"><span class="m" style="letter-spacing:-1.20px">C:\Documents and...</span></div>
<div class="tbb" style="left:747px;width:157px"></div>
<svg style="left:756px;top:877px" width="18" height="16" viewBox="0 0 18 16"><path d="M1 3.5Q1 2 2.5 2H6.5L8 4H15.5Q17 4 17 5.5V13Q17 14.5 15.5 14.5H2.5Q1 14.5 1 13Z" fill="#e8b830" stroke="#b98a14" stroke-width="1"/><path d="M1.6 6.5Q1.6 5.3 3 5.3H15Q16.4 5.3 16.4 6.5V12.8Q16.4 13.9 15 13.9H3Q1.6 13.9 1.6 12.8Z" fill="#fde88a" stroke="#f7d55c" stroke-width=".6"/></svg>
<div class="t" style="left:776px;top:878px;color:#fff;"><span class="m" style="letter-spacing:-1.20px">C:\Documents and...</span></div>
<div class="tbb" style="left:907px;width:157px"></div>
<svg style="left:916px;top:877px" width="18" height="16" viewBox="0 0 18 16"><path d="M1 3.5Q1 2 2.5 2H6.5L8 4H15.5Q17 4 17 5.5V13Q17 14.5 15.5 14.5H2.5Q1 14.5 1 13Z" fill="#e8b830" stroke="#b98a14" stroke-width="1"/><path d="M1.6 6.5Q1.6 5.3 3 5.3H15Q16.4 5.3 16.4 6.5V12.8Q16.4 13.9 15 13.9H3Q1.6 13.9 1.6 12.8Z" fill="#fde88a" stroke="#f7d55c" stroke-width=".6"/></svg>
<div class="t" style="left:936px;top:878px;color:#fff;"><span class="m" style="letter-spacing:-1.20px">C:\Documents and...</span></div>
<div class="tbb act" style="left:1067px;width:157px"></div>
<svg style="left:1076px;top:877px" width="18" height="17" viewBox="0 0 18 17"><rect x=".5" y="1" width="17" height="15" fill="#f4f4f4" stroke="#999"/><rect x="1" y="10" width="16" height="5.500" fill="#e8e8e8"/><text x="1" y="10" font-size="10" font-weight="bold" fill="#c8161c">A</text><text x="8" y="9.500" font-size="6.500" font-weight="bold" fill="#c8161c">10</text></svg>
<div class="t" style="left:1096px;top:878px;color:#fff;">机械工程师<span class="m" style="letter-spacing:-1.20px">CAD</span><span class="d" style="letter-spacing:-0.67px">201</span><span class="m" style="letter-spacing:-1.20px">...</span></div>
<div class="a" style="left:1407px;top:878px;width:14px;height:16px;background:#2aa3f4"></div>
<div class="t" style="left:1408px;top:878px;color:#fff;font-size:12px;line-height:15px;letter-spacing:-.5px">du</div>
<div class="a" id="tray"></div>
<svg style="left:1440px;top:874px" width="115" height="24" viewBox="1440 874 115 24"><ellipse cx="1452" cy="882" rx="4.500" ry="5" fill="#222"/><ellipse cx="1452" cy="883.500" rx="2.500" ry="3" fill="#fff"/><path d="M1447 886q5 2.500 10 0l2 3q-7 3-14 0z" fill="#e8392b"/><path d="M1444 890.500q8-3 16 1q-8 2.500-16-1z" fill="#f6c33a"/><rect x="1469" y="877" width="8" height="7" fill="#3a4a9a" stroke="#c9d2f0" stroke-width=".8"/><rect x="1463" y="881" width="9" height="8" fill="#9cc4ee" stroke="#dfe9fb" stroke-width=".8"/><path d="M1464 892h8M1471 888h6" stroke="#d4dcf4" stroke-width="1.500"/><circle cx="1486" cy="883" r="5" fill="#8d8d97" stroke="#444" stroke-width="1"/><circle cx="1485" cy="882" r="2" fill="#d9c9c9"/><path d="M1490 890l5-5" stroke="#b8c8e8" stroke-width="1"/><path d="M1499 880l5-3 2 3-3 2z" fill="#3aa83a"/><path d="M1500 884l8-2 3 6-8 3z" fill="#4a7a4a" stroke="#234" stroke-width=".6"/><path d="M1503 885.500l4-1 1.500 3-4 1.300z" fill="#9cc4ee"/><path d="M1517 879q7-3 14 0q0 8-7 12q-7-4-7-12z" fill="#fff"/><path d="M1520 884l4 3 6-6" stroke="#2a7fe0" stroke-width="1.800" fill="none"/><circle cx="1529" cy="890" r="3.200" fill="#3ab54a"/><path d="M1527 890h4" stroke="#fff" stroke-width="1.200"/><path d="M1535 883h3l5-5v15l-5-5h-3z" fill="#d9482a" stroke="#5a1a0a" stroke-width=".7"/><path d="M1545.500 879v12M1548 881v8" stroke="#222" stroke-width="1.200"/></svg>
<div class="t" style="left:1557px;top:878px;color:#fff;"><span class="d" style="letter-spacing:-0.67px">16</span><span class="m" style="letter-spacing:-1.20px">:</span><span class="d" style="letter-spacing:-0.67px">48</span></div>
<!-- acad -->
<div class="a" style="left:636px;top:169px;width:791px;height:700px;background:#6b6b6b;border:1px solid #3d3d3d"></div>
<div class="a" style="left:637px;top:170px;width:3px;height:698px;background:linear-gradient(90deg,#868686,#707070)"></div>
<div class="a" style="left:1423px;top:170px;width:3px;height:698px;background:linear-gradient(90deg,#6e6e6e,#646464)"></div>
<div class="a" style="left:637px;top:170px;width:789px;height:71px;background:linear-gradient(#969696 0,#888888 18%,#737373 50%,#5e5e5e 78%,#4a4a4a 100%);border-bottom:1px solid #3a3a3a"></div>
<div class="a" style="left:640px;top:175px;width:41px;height:41px;background:linear-gradient(135deg,#dadada 0,#b4b4b4 40%,#8a8a8a 100%);border:1px solid #4a4a4a;box-shadow:inset 1px 1px 0 #ececec"></div>
<svg style="left:640px;top:175px" width="41" height="41" viewBox="0 0 41 41"><defs><linearGradient id="ared" x1="0" y1="0" x2="1" y2="1"><stop offset="0" stop-color="#f0454a"/><stop offset=".5" stop-color="#d0161c"/><stop offset="1" stop-color="#8c0a0e"/></linearGradient></defs><path d="M13 4L20 5L29 31L22 35L19.500 28L11 31L9 37L3.500 34Z" fill="url(#ared)"/><path d="M14.500 14L18 24L11.500 26Z" fill="#a8a8a8"/><path d="M13 4L20 5L17 8Z" fill="#f97a7e"/><path d="M30.500 19.500h7l-3.500 4z" fill="#222"/></svg>
<div class="a" style="left:681px;top:175px;width:175px;height:24px;background:linear-gradient(#999999,#838383);border:1px solid #3f3f3f;border-left:none"></div>
<div class="t" style="left:911px;top:177px;font-size:13px;color:#f4f4f4;font-weight:bold;font-family:"Liberation Serif","Noto Serif CJK SC",serif;"><span style="letter-spacing:0.70px">机械工程师</span><span class="m" style="letter-spacing:-0.20px">CAD</span><span class="d" style="letter-spacing:0.37px">2010</span><span class="m" style="letter-spacing:-0.20px">   LS</span><span class="d" style="letter-spacing:0.37px">250</span><span style="letter-spacing:0.70px">总图</span><span class="m" style="letter-spacing:-0.20px">.dwg</span></div>
<div class="a" style="left:1207px;top:172px;width:148px;height:24px;background:linear-gradient(#8c8c8c,#787878);border:1px solid #3a3a3a"></div>
<div class="t" style="left:693px;top:203.5px;color:#f2f2f2;"><span class="m" style="letter-spacing:-1.20px">AutoCAD</span><span class="d" style="letter-spacing:-0.67px">2010</span>菜单<span class="m" style="letter-spacing:-1.20px">(<u>A</u>)</span></div>
<div class="t" style="left:820px;top:203.5px;color:#f2f2f2;">绘图<span class="m" style="letter-spacing:-1.20px">(<u>D</u>)</span></div>
<div class="t" style="left:883px;top:203.5px;color:#f2f2f2;">工具<span class="m" style="letter-spacing:-1.20px">(<u>T</u>)</span></div>
<div class="t" style="left:944px;top:203.5px;color:#f2f2f2;">标准件<span class="m" style="letter-spacing:-1.20px">(<u>S</u>)</span></div>
<div class="t" style="left:1019px;top:203.5px;color:#f2f2f2;">常用件<span class="m" style="letter-spacing:-1.20px">(<u>C</u>)</span></div>
<div class="t" style="left:1092px;top:203.5px;color:#f2f2f2;">标注<span class="m" style="letter-spacing:-1.20px">(<u>L</u>)</span></div>
<div class="t" style="left:1154px;top:203.5px;color:#f2f2f2;">尺寸<span class="m" style="letter-spacing:-1.20px">(<u>M</u>)</span></div>
<div class="t" style="left:1216px;top:203.5px;color:#f2f2f2;">尺寸驱动<span class="m" style="letter-spacing:-1.20px">(<u>P</u>)</span></div>
<div class="t" style="left:1302px;top:203.5px;color:#f2f2f2;">其它<span class="m" style="letter-spacing:-1.20px">(<u>O</u>)</span></div>
<div class="t" style="left:693px;top:223.5px;color:#f2f2f2;">窗口<span class="m" style="letter-spacing:-1.20px">(<u>W</u>)</span></div>
<div class="a" style="left:640px;top:242px;width:9px;height:22px;background:#5c5c5c;border:1px solid #474747;border-right:none"></div><svg style="left:640px;top:242px" width="9" height="22" viewBox="0 0 9 22" shape-rendering="crispEdges"><rect x="2" y="3" width="1" height="1" fill="#1e1e1e"/><rect x="5" y="3" width="1" height="1" fill="#1e1e1e"/><rect x="3" y="4" width="1" height="1" fill="#8a8a8a"/><rect x="6" y="4" width="1" height="1" fill="#8a8a8a"/><rect x="2" y="5" width="1" height="1" fill="#1e1e1e"/><rect x="5" y="5" width="1" height="1" fill="#1e1e1e"/><rect x="3" y="6" width="1" height="1" fill="#8a8a8a"/><rect x="6" y="6" width="1" height="1" fill="#8a8a8a"/><rect x="2" y="7" width="1" height="1" fill="#1e1e1e"/><rect x="5" y="7" width="1" height="1" fill="#1e1e1e"/><rect x="3" y="8" width="1" height="1" fill="#8a8a8a"/><rect x="6" y="8" width="1" height="1" fill="#8a8a8a"/><rect x="2" y="9" width="1" height="1" fill="#1e1e1e"/><rect x="5" y="9" width="1" height="1" fill="#1e1e1e"/><rect x="3" y="10" width="1" height="1" fill="#8a8a8a"/><rect x="6" y="10" width="1" height="1" fill="#8a8a8a"/><rect x="2" y="11" width="1" height="1" fill="#1e1e1e"/><rect x="5" y="11" width="1" height="1" fill="#1e1e1e"/><rect x="3" y="12" width="1" height="1" fill="#8a8a8a"/><rect x="6" y="12" width="1" height="1" fill="#8a8a8a"/><rect x="2" y="13" width="1" height="1" fill="#1e1e1e"/><rect x="5" y="13" width="1" height="1" fill="#1e1e1e"/><rect x="3" y="14" width="1" height="1" fill="#8a8a8a"/><rect x="6" y="14" width="1" height="1" fill="#8a8a8a"/><rect x="2" y="15" width="1" height="1" fill="#1e1e1e"/><rect x="5" y="15" width="1" height="1" fill="#1e1e1e"/><rect x="3" y="16" width="1" height="1" fill="#8a8a8a"/><rect x="6" y="16" width="1" height="1" fill="#8a8a8a"/><rect x="2" y="17" width="1" height="1" fill="#1e1e1e"/><rect x="5" y="17" width="1" height="1" fill="#1e1e1e"/><rect x="3" y="18" width="1" height="1" fill="#8a8a8a"/><rect x="6" y="18" width="1" height="1" fill="#8a8a8a"/><rect x="2" y="19" width="1" height="1" fill="#1e1e1e"/><rect x="5" y="19" width="1" height="1" fill="#1e1e1e"/><rect x="3" y="20" width="1" height="1" fill="#8a8a8a"/><rect x="6" y="20" width="1" height="1" fill="#8a8a8a"/></svg>
<div class="a" style="left:649px;top:242px;width:636px;height:22px;background:linear-gradient(#f6f6f6,#ebebeb);border-top:1px solid #fff;border-bottom:1px solid #cfcfcf"></div>
<div class="a" style="left:640px;top:269px;width:9px;height:22px;background:#5c5c5c;border:1px solid #474747;border-right:none"></div><svg style="left:640px;top:269px" width="9" height="22" viewBox="0 0 9 22" shape-rendering="crispEdges"><rect x="2" y="3" width="1" height="1" fill="#1e1e1e"/><rect x="5" y="3" width="1" height="1" fill="#1e1e1e"/><rect x="3" y="4" width="1" height="1" fill="#8a8a8a"/><rect x="6" y="4" width="1" height="1" fill="#8a8a8a"/><rect x="2" y="5" width="1" height="1" fill="#1e1e1e"/><rect x="5" y="5" width="1" height="1" fill="#1e1e1e"/><rect x="3" y="6" width="1" height="1" fill="#8a8a8a"/><rect x="6" y="6" width="1" height="1" fill="#8a8a8a"/><rect x="2" y="7" width="1" height="1" fill="#1e1e1e"/><rect x="5" y="7" width="1" height="1" fill="#1e1e1e"/><rect x="3" y="8" width="1" height="1" fill="#8a8a8a"/><rect x="6" y="8" width="1" height="1" fill="#8a8a8a"/><rect x="2" y="9" width="1" height="1" fill="#1e1e1e"/><rect x="5" y="9" width="1" height="1" fill="#1e1e1e"/><rect x="3" y="10" width="1" height="1" fill="#8a8a8a"/><rect x="6" y="10" width="1" height="1" fill="#8a8a8a"/><rect x="2" y="11" width="1" height="1" fill="#1e1e1e"/><rect x="5" y="11" width="1" height="1" fill="#1e1e1e"/><rect x="3" y="12" width="1" height="1" fill="#8a8a8a"/><rect x="6" y="12" width="1" height="1" fill="#8a8a8a"/><rect x="2" y="13" width="1" height="1" fill="#1e1e1e"/><rect x="5" y="13" width="1" height="1" fill="#1e1e1e"/><rect x="3" y="14" width="1" height="1" fill="#8a8a8a"/><rect x="6" y="14" width="1" height="1" fill="#8a8a8a"/><rect x="2" y="15" width="1" height="1" fill="#1e1e1e"/><rect x="5" y="15" width="1" height="1" fill="#1e1e1e"/><rect x="3" y="16" width="1" height="1" fill="#8a8a8a"/><rect x="6" y="16" width="1" height="1" fill="#8a8a8a"/><rect x="2" y="17" width="1" height="1" fill="#1e1e1e"/><rect x="5" y="17" width="1" height="1" fill="#1e1e1e"/><rect x="3" y="18" width="1" height="1" fill="#8a8a8a"/><rect x="6" y="18" width="1" height="1" fill="#8a8a8a"/><rect x="2" y="19" width="1" height="1" fill="#1e1e1e"/><rect x="5" y="19" width="1" height="1" fill="#1e1e1e"/><rect x="3" y="20" width="1" height="1" fill="#8a8a8a"/><rect x="6" y="20" width="1" height="1" fill="#8a8a8a"/></svg>
<div class="a" style="left:649px;top:269px;width:391px;height:22px;background:linear-gradient(#f6f6f6,#ebebeb)"></div>
<div class="a" style="left:672px;top:269px;width:299px;height:22px;background:#fff;border:1px solid #8a9ab0"></div>
<div class="a" style="left:955px;top:271px;width:15px;height:18px;background:linear-gradient(#cfddfb,#b4c7f3);border:1px solid #b3c5ef;border-radius:2px"></div>
<div class="a" style="left:1043px;top:269px;width:9px;height:22px;background:#5c5c5c;border:1px solid #474747;border-right:none"></div><svg style="left:1043px;top:269px" width="9" height="22" viewBox="0 0 9 22" shape-rendering="crispEdges"><rect x="2" y="3" width="1" height="1" fill="#1e1e1e"/><rect x="5" y="3" width="1" height="1" fill="#1e1e1e"/><rect x="3" y="4" width="1" height="1" fill="#8a8a8a"/><rect x="6" y="4" width="1" height="1" fill="#8a8a8a"/><rect x="2" y="5" width="1" height="1" fill="#1e1e1e"/><rect x="5" y="5" width="1" height="1" fill="#1e1e1e"/><rect x="3" y="6" width="1" height="1" fill="#8a8a8a"/><rect x="6" y="6" width="1" height="1" fill="#8a8a8a"/><rect x="2" y="7" width="1" height="1" fill="#1e1e1e"/><rect x="5" y="7" width="1" height="1" fill="#1e1e1e"/><rect x="3" y="8" width="1" height="1" fill="#8a8a8a"/><rect x="6" y="8" width="1" height="1" fill="#8a8a8a"/><rect x="2" y="9" width="1" height="1" fill="#1e1e1e"/><rect x="5" y="9" width="1" height="1" fill="#1e1e1e"/><rect x="3" y="10" width="1" height="1" fill="#8a8a8a"/><rect x="6" y="10" width="1" height="1" fill="#8a8a8a"/><rect x="2" y="11" width="1" height="1" fill="#1e1e1e"/><rect x="5" y="11" width="1" height="1" fill="#1e1e1e"/><rect x="3" y="12" width="1" height="1" fill="#8a8a8a"/><rect x="6" y="12" width="1" height="1" fill="#8a8a8a"/><rect x="2" y="13" width="1" height="1" fill="#1e1e1e"/><rect x="5" y="13" width="1" height="1" fill="#1e1e1e"/><rect x="3" y="14" width="1" height="1" fill="#8a8a8a"/><rect x="6" y="14" width="1" height="1" fill="#8a8a8a"/><rect x="2" y="15" width="1" height="1" fill="#1e1e1e"/><rect x="5" y="15" width="1" height="1" fill="#1e1e1e"/><rect x="3" y="16" width="1" height="1" fill="#8a8a8a"/><rect x="6" y="16" width="1" height="1" fill="#8a8a8a"/><rect x="2" y="17" width="1" height="1" fill="#1e1e1e"/><rect x="5" y="17" width="1" height="1" fill="#1e1e1e"/><rect x="3" y="18" width="1" height="1" fill="#8a8a8a"/><rect x="6" y="18" width="1" height="1" fill="#8a8a8a"/><rect x="2" y="19" width="1" height="1" fill="#1e1e1e"/><rect x="5" y="19" width="1" height="1" fill="#1e1e1e"/><rect x="3" y="20" width="1" height="1" fill="#8a8a8a"/><rect x="6" y="20" width="1" height="1" fill="#8a8a8a"/></svg>
<div class="a" style="left:1052px;top:269px;width:149px;height:22px;background:#fff;border:1px solid #8a9ab0"></div>
<div class="a" style="left:1185px;top:271px;width:15px;height:18px;background:linear-gradient(#cfddfb,#b4c7f3);border:1px solid #b3c5ef;border-radius:2px"></div>
<div class="a" style="left:1201px;top:269px;width:5px;height:22px;background:#e4e4e4;border-left:1px solid #bdbdbd;border-right:1px solid #bdbdbd"></div>
<div class="a" style="left:1206px;top:269px;width:161px;height:22px;background:#fff;border:1px solid #8a9ab0"></div>
<div class="a" style="left:1351px;top:271px;width:15px;height:18px;background:linear-gradient(#cfddfb,#b4c7f3);border:1px solid #b3c5ef;border-radius:2px"></div>
<div class="a" style="left:1367px;top:269px;width:5px;height:22px;background:#e4e4e4;border-left:1px solid #bdbdbd;border-right:1px solid #bdbdbd"></div>
<div class="a" style="left:1372px;top:269px;width:51px;height:22px;background:#fff;border:1px solid #8a9ab0;border-right:none"></div>
<div class="a" style="left:742px;top:275.5px;width:10px;height:9.5px;background:#f00;border:1px solid #6a0000"></div>
<div class="t" style="left:757px;top:273px;"><span class="d" style="letter-spacing:-0.67px">0</span></div>
<div class="a" style="left:1057px;top:275.5px;width:10px;height:9.5px;background:#f00;border:1px solid #6a0000"></div>
<div class="t" style="left:1070px;top:273px;"><span class="m" style="letter-spacing:-1.20px">ByLayer</span></div>
<div class="t" style="left:1276px;top:273px;"><span class="m" style="letter-spacing:-1.20px">ByLayer</span></div>
<div class="t" style="left:1416px;top:273px;"><span class="m" style="letter-spacing:-1.20px">B</span></div>
<div class="a" style="left:641px;top:296px;width:24px;height:9px;background:#565656;border:1px solid #444"></div>
<div class="a" style="left:641px;top:305px;width:24px;height:418px;background:#ebebeb;border:1px solid #5a5a5a;border-top:none"></div>
<div class="a" style="left:1396px;top:296px;width:24px;height:9px;background:#565656;border:1px solid #444"></div>
<div class="a" style="left:1396px;top:305px;width:24px;height:374px;background:linear-gradient(90deg,#f2f2f2,#e6e6e6);border:1px solid #5a5a5a;border-top:none"></div>
<div class="a" style="left:669px;top:296px;width:722px;height:487px;background:#ece9d8;border:2px solid #b9b7ab;border-right:none;border-bottom:none"></div>
<div class="a" style="left:671px;top:298px;width:701px;height:467px;background:#000"></div>
<div class="a" style="left:1372px;top:298px;width:19px;height:467px;background:linear-gradient(90deg,#f3f1ea,#fdfdfb 50%,#f0eee6)"></div>
<div class="a" style="left:1373px;top:299px;width:17px;height:17px;background:linear-gradient(#cfddfb,#b9cbf5);border:1px solid #aebfee;border-radius:2px"></div>
<div class="a" style="left:1373px;top:317px;width:17px;height:16px;background:linear-gradient(90deg,#cfddfb,#bccdf6);border:1px solid #aebfee;border-radius:2px"></div>
<div class="a" style="left:1373px;top:748px;width:17px;height:17px;background:linear-gradient(#cfddfb,#b9cbf5);border:1px solid #aebfee;border-radius:2px"></div>
<div class="a" style="left:671px;top:765px;width:720px;height:17px;background:#ece9d8"></div>
<div class="a" style="left:672px;top:766px;width:15px;height:15px;background:#ece9d8;border:1px solid #d2cebc;box-shadow:inset 1px 1px 0 #fff"></div>
<div class="a" style="left:687px;top:766px;width:15px;height:15px;background:#ece9d8;border:1px solid #d2cebc;box-shadow:inset 1px 1px 0 #fff"></div>
<div class="a" style="left:702px;top:766px;width:15px;height:15px;background:#ece9d8;border:1px solid #d2cebc;box-shadow:inset 1px 1px 0 #fff"></div>
<div class="a" style="left:717px;top:766px;width:15px;height:15px;background:#ece9d8;border:1px solid #d2cebc;box-shadow:inset 1px 1px 0 #fff"></div>
<div class="a" style="left:1133px;top:765px;width:239px;height:17px;background:linear-gradient(#f3f1ea,#fdfdfb 50%,#f0eee6)"></div>
<div class="a" style="left:1139px;top:766px;width:16px;height:15px;background:linear-gradient(#cfddfb,#b9cbf5);border:1px solid #aebfee;border-radius:2px"></div>
<div class="a" style="left:1157px;top:766px;width:16px;height:15px;background:linear-gradient(#cfddfb,#b9cbf5);border:1px solid #aebfee;border-radius:2px"></div>
<div class="a" style="left:1356px;top:766px;width:16px;height:15px;background:linear-gradient(#cfddfb,#b9cbf5);border:1px solid #aebfee;border-radius:2px"></div>
<div class="a" style="left:641px;top:786px;width:14px;height:58px;background:linear-gradient(90deg,#9a9a9a,#8a8a8a);border-radius:3px 0 0 3px"></div>
<div class="a" style="left:655px;top:786px;width:768px;height:58px;background:#fff"></div>
<div class="a" style="left:655px;top:825px;width:752px;height:1px;background:#9a9a9a"></div>
<div class="a" style="left:1407px;top:786px;width:16px;height:39px;background:#f7f6f1"></div>
<div class="a" style="left:1407px;top:787px;width:15px;height:14px;background:linear-gradient(#cfddfb,#b9cbf5);border:1px solid #aebfee;border-radius:2px"></div>
<div class="a" style="left:1407px;top:808px;width:15px;height:14px;background:linear-gradient(#cfddfb,#b9cbf5);border:1px solid #aebfee;border-radius:2px"></div>
<div class="a" style="left:1338px;top:827px;width:69px;height:16px;background:#f7f6f1"></div>
<div class="a" style="left:1340px;top:828px;width:15px;height:14px;background:linear-gradient(#cfddfb,#b9cbf5);border:1px solid #aebfee;border-radius:2px"></div>
<div class="a" style="left:1357px;top:828px;width:15px;height:14px;background:linear-gradient(#cfddfb,#b9cbf5);border:1px solid #aebfee;border-radius:2px"></div>
<div class="a" style="left:1390px;top:828px;width:15px;height:14px;background:linear-gradient(#cfddfb,#b9cbf5);border:1px solid #aebfee;border-radius:2px"></div>
<div class="a" style="left:1407px;top:826px;width:16px;height:18px;background:#ece9d8"></div>
<div class="t" style="left:658px;top:786px;font-size:13px;font-family:"Liberation Mono","Noto Serif CJK SC",monospace;"><span style="letter-spacing:3.00px">命令</span><span class="m" style="letter-spacing:0.10px">: COMMANDLINE</span></div>
<div class="t" style="left:658px;top:802px;font-size:13px;font-family:"Liberation Mono","Noto Serif CJK SC",monospace;"><span style="letter-spacing:3.00px">命令</span><span class="m" style="letter-spacing:0.10px">:</span></div>
<div class="t" style="left:658px;top:827px;font-size:13px;font-family:"Liberation Mono","Noto Serif CJK SC",monospace;"><span style="letter-spacing:3.00px">命令</span><span class="m" style="letter-spacing:0.10px">:</span></div>
<div class="a" style="left:637px;top:845px;width:789px;height:23px;background:linear-gradient(#8d8d8d,#7f7f7f 50%,#727272);border-top:1px solid #4a4a4a"></div>
<div class="t" style="left:646px;top:849px;color:#111;">英科宇机械<span class="m" style="letter-spacing:-1.20px">CAD</span><span class="d" style="letter-spacing:-0.67px">2010</span></div>
<div class="t" style="left:760px;top:849px;color:#111;"><span class="d" style="letter-spacing:-0.67px">206</span><span class="m" style="letter-spacing:-1.20px">.</span><span class="d" style="letter-spacing:-0.67px">2177</span><span class="m" style="letter-spacing:-1.20px">,  </span><span class="d" style="letter-spacing:-0.67px">297</span><span class="m" style="letter-spacing:-1.20px">.</span><span class="d" style="letter-spacing:-0.67px">4260</span><span class="m" style="letter-spacing:-1.20px">, </span><span class="d" style="letter-spacing:-0.67px">0</span><span class="m" style="letter-spacing:-1.20px">.</span><span class="d" style="letter-spacing:-0.67px">0000</span></div>
<div class="a" style="left:959.5px;top:846px;width:22px;height:21px;background:linear-gradient(#c2c2c2,#a8a8a8);border-left:1px solid #8a8a8a;border-right:1px solid #d0d0d0"></div>
<div class="a" style="left:981.5px;top:846px;width:22px;height:21px;background:linear-gradient(#c2c2c2,#a8a8a8);border-left:1px solid #8a8a8a;border-right:1px solid #d0d0d0"></div>
<div class="a" style="left:1003.5px;top:846px;width:22px;height:21px;background:linear-gradient(#c2c2c2,#a8a8a8);border-left:1px solid #8a8a8a;border-right:1px solid #d0d0d0"></div>
<div class="a" style="left:1025.5px;top:846px;width:22px;height:21px;background:linear-gradient(#c2c2c2,#a8a8a8);border-left:1px solid #8a8a8a;border-right:1px solid #d0d0d0"></div>
<div class="a" style="left:1047.5px;top:846px;width:22px;height:21px;background:linear-gradient(#dff1fa,#a9d3e8);border-left:1px solid #8a8a8a;border-right:1px solid #d0d0d0"></div>
<div class="a" style="left:1069.5px;top:846px;width:22px;height:21px;background:linear-gradient(#dff1fa,#a9d3e8);border-left:1px solid #8a8a8a;border-right:1px solid #d0d0d0"></div>
<div class="a" style="left:1091.5px;top:846px;width:22px;height:21px;background:linear-gradient(#dff1fa,#a9d3e8);border-left:1px solid #8a8a8a;border-right:1px solid #d0d0d0"></div>
<div class="a" style="left:1113.5px;top:846px;width:22px;height:21px;background:linear-gradient(#dff1fa,#a9d3e8);border-left:1px solid #8a8a8a;border-right:1px solid #d0d0d0"></div>
<div class="a" style="left:1135.5px;top:846px;width:22px;height:21px;background:linear-gradient(#c2c2c2,#a8a8a8);border-left:1px solid #8a8a8a;border-right:1px solid #d0d0d0"></div>
<div class="a" style="left:1157.5px;top:846px;width:22px;height:21px;background:linear-gradient(#dff1fa,#a9d3e8);border-left:1px solid #8a8a8a;border-right:1px solid #d0d0d0"></div>
<div class="a" style="left:1192px;top:846px;width:29px;height:21px;background:linear-gradient(#c2c2c2,#a8a8a8);border-left:1px solid #8a8a8a;border-right:1px solid #8a8a8a"></div>
<div class="a" style="left:1222px;top:846px;width:21px;height:21px;background:linear-gradient(#c2c2c2,#a8a8a8);border-right:1px solid #8a8a8a"></div>
<div class="a" style="left:1244px;top:846px;width:21px;height:21px;background:linear-gradient(#c2c2c2,#a8a8a8)"></div>
<div class="t" style="left:1194.5px;top:849.5px;color:#111;">模型</div>
<div class="a" style="left:1284px;top:846px;width:22px;height:21px;background:linear-gradient(#c2c2c2,#a8a8a8);border-right:1px solid #8a8a8a"></div>
<div class="a" style="left:1306px;top:846px;width:22px;height:21px;background:linear-gradient(#c2c2c2,#a8a8a8);border-right:1px solid #8a8a8a"></div>
<div class="a" style="left:1328px;top:846px;width:16px;height:21px;background:linear-gradient(#c2c2c2,#a8a8a8)"></div>
<div class="a" style="left:1344px;top:846px;width:23px;height:21px;background:linear-gradient(#b9c0cc,#a9afba)"></div>
<div class="a" style="left:1373px;top:846px;width:12px;height:21px;background:linear-gradient(#c2c2c2,#a8a8a8);border-right:1px solid #8a8a8a"></div>
<div class="a" style="left:1385px;top:846px;width:22px;height:21px;background:linear-gradient(#c2c2c2,#a8a8a8)"></div>
<!-- drawing -->
<svg style="left:671px;top:298px" width="701" height="467" viewBox="671 298 701 467" shape-rendering="crispEdges"><g><path d="M1365 378.5 L775.5 378.5 L775.5 765" stroke="#00ff00" stroke-width="1.2" fill="none" /><path d="M1365 378 L1365 765" stroke="#00ff00" stroke-width="2.5" fill="none" stroke-dasharray="5 1.500"/><path d="M1358.5 385.5 L793.5 385.5 L793.5 765" stroke="#10a6ae" stroke-width="1" fill="none" /><path d="M1358.5 385 L1358.5 765" stroke="#10a6ae" stroke-width="1" fill="none" /><path d="M793.5 395.5 L821.5 395.5 L821.5 385.5" stroke="#10a6ae" stroke-width="1" fill="none" /><path d="M930 412.5 L1261 412.5" stroke="#00ff00" stroke-width="1" fill="none" /><path d="M930 417.5 L1275 417.5" stroke="#00ff00" stroke-width="1" fill="none" /><path d="M930.5 408 L930.5 481" stroke="#00ff00" stroke-width="1" fill="none" /><path d="M1261.5 408 L1261.5 432" stroke="#00ff00" stroke-width="1" fill="none" /><path d="M1275.5 414 L1275.5 470" stroke="#00ff00" stroke-width="1" fill="none" /><path d="M909 427.5 L930 427.5" stroke="#00ff00" stroke-width="1" fill="none" /><path d="M909.5 424 L909.5 468" stroke="#00ff00" stroke-width="1" fill="none" /><path d="M950 425.5 L972 425.5" stroke="#00ff00" stroke-width="1" fill="none" /><path d="M950.5 422 L950.5 432" stroke="#00ff00" stroke-width="1" fill="none" /><path d="M972.5 422 L972.5 432" stroke="#00ff00" stroke-width="1" fill="none" /><path d="M1240 423.5 L1260 423.5" stroke="#00ff00" stroke-width="1" fill="none" /><path d="M1240.5 421 L1240.5 436" stroke="#00ff00" stroke-width="1" fill="none" /><path d="M927 481.5 L1265 481.5" stroke="#00ff00" stroke-width="1" fill="none" /><path d="M927 476.5 L951 476.5" stroke="#00ff00" stroke-width="1" fill="none" /><path d="M951.5 465 L951.5 480" stroke="#00ff00" stroke-width="1" fill="none" /><path d="M945.5 448 L945.5 470" stroke="#00ff00" stroke-width="1" fill="none" /><path d="M1011.5 474 L1011.5 485" stroke="#00ff00" stroke-width="1" fill="none" /><path d="M1095.5 468 L1095.5 485" stroke="#00ff00" stroke-width="1" fill="none" /><path d="M1160.5 470 L1160.5 485" stroke="#00ff00" stroke-width="1" fill="none" /><path d="M1264.5 470 L1264.5 485" stroke="#00ff00" stroke-width="1" fill="none" /><path d="M1019.5 416 L1019.5 430" stroke="#00ff00" stroke-width="1" fill="none" /><path d="M1102.5 416 L1102.5 430" stroke="#00ff00" stroke-width="1" fill="none" /><path d="M1172.5 416 L1172.5 430" stroke="#00ff00" stroke-width="1" fill="none" /><rect x="1016" y="426" width="7" height="4" stroke="#00ff00" stroke-width="1" fill="#00ff00"/><rect x="1099" y="426" width="7" height="4" stroke="#00ff00" stroke-width="1" fill="#00ff00"/><rect x="1169" y="426" width="7" height="4" stroke="#00ff00" stroke-width="1" fill="#00ff00"/><path d="M1258 429.5 L1296 429.5" stroke="#00ff00" stroke-width="1" fill="none" /><path d="M1258 472.5 L1296 472.5" stroke="#00ff00" stroke-width="1" fill="none" /><path d="M1274 448.5 L1286 448.5" stroke="#00ff00" stroke-width="1" fill="none" /><path d="M1293.5 429 L1293.5 472" stroke="#00ff00" stroke-width="1" fill="none" /><path d="M1283.5 448 L1283.5 472" stroke="#00ff00" stroke-width="1" fill="none" /><path d="M1235.5 426 L1235.5 449" stroke="#00ff00" stroke-width="1" fill="none" /><path d="M1232 448.5 L1245 448.5" stroke="#00ff00" stroke-width="1" fill="none" /><path d="M930 429.5 L1261 429.5" stroke="#10a6ae" stroke-width="2" fill="none" /><path d="M933 432.5 L1258 432.5" stroke="#10a6ae" stroke-width="1" fill="none" /><path d="M933 466.5 L1258 466.5" stroke="#10a6ae" stroke-width="1.5" fill="none" /><path d="M931 429 L931 476" stroke="#10a6ae" stroke-width="2" fill="none" /><path d="M934.5 432 L934.5 467" stroke="#10a6ae" stroke-width="1" fill="none" /><rect x="1121.5" y="430" width="4.5" height="40" stroke="#10a6ae" stroke-width="1" fill="#0a7f86"/><rect x="1191" y="430" width="4.5" height="40" stroke="#10a6ae" stroke-width="1" fill="#0a7f86"/><path d="M1040.5 432 L1040.5 467" stroke="#10a6ae" stroke-width="1" fill="none" /><rect x="1258" y="430" width="3" height="44" stroke="#10a6ae" stroke-width="1" fill="#0a7f86"/><path d="M1121.5 470 L1123.5 473 L1126 470" stroke="#10a6ae" stroke-width="1" fill="none" /><path d="M1191 470 L1193 473 L1195.5 470" stroke="#10a6ae" stroke-width="1" fill="none" /><path d="M951 441.5 L1016 441.5" stroke="#10a6ae" stroke-width="1" fill="none" /><path d="M951 457.5 L1016 457.5" stroke="#10a6ae" stroke-width="1" fill="none" /><rect x="1263" y="442" width="12" height="13" stroke="#10a6ae" stroke-width="1" fill="none"/><rect x="1266" y="444" width="9" height="9" stroke="#10a6ae" stroke-width="1" fill="none"/><path d="M1258 458 L1275 458 L1275 462 L1258 462" stroke="#10a6ae" stroke-width="1.5" fill="none" /><path d="M1275 462 L1266 474 L1258 474" stroke="#10a6ae" stroke-width="1" fill="none" /><rect x="1230" y="426" width="18" height="4" stroke="#10a6ae" stroke-width="1" fill="none"/><rect x="856" y="440" width="24" height="18" stroke="#10a6ae" stroke-width="1" fill="none"/><path d="M861 442.5 L880 442.5" stroke="#10a6ae" stroke-width="1" fill="none" /><path d="M861 445 L880 445" stroke="#10a6ae" stroke-width="1" fill="none" /><path d="M861 447.5 L880 447.5" stroke="#10a6ae" stroke-width="1" fill="none" /><path d="M861 450 L880 450" stroke="#10a6ae" stroke-width="1" fill="none" /><path d="M861 452.5 L880 452.5" stroke="#10a6ae" stroke-width="1" fill="none" /><path d="M861 455 L880 455" stroke="#10a6ae" stroke-width="1" fill="none" /><path d="M860 440 L857 443 L857 455 L860 458" stroke="#10a6ae" stroke-width="1" fill="none" /><rect x="883" y="437" width="10" height="24" stroke="#10a6ae" stroke-width="1.5" fill="none"/><path d="M885.5 438 L885.5 460" stroke="#10a6ae" stroke-width="1" fill="none" /><path d="M888 438 L888 460" stroke="#10a6ae" stroke-width="1" fill="none" /><path d="M890.5 438 L890.5 460" stroke="#10a6ae" stroke-width="1" fill="none" /><path d="M893 440 L900 444 L900 453 L893 458" stroke="#10a6ae" stroke-width="1" fill="none" /><rect x="884" y="461" width="14" height="12" stroke="#10a6ae" stroke-width="1" fill="none"/><path d="M884 473.5 L930 473.5" stroke="#10a6ae" stroke-width="1" fill="none" /><rect x="898" y="464" width="16" height="9" stroke="#10a6ae" stroke-width="1" fill="none"/><rect x="911" y="441" width="5" height="16" stroke="#10a6ae" stroke-width="1.5" fill="#0a7f86"/><rect x="916" y="443" width="10" height="12" stroke="#10a6ae" stroke-width="1" fill="none"/><rect x="926" y="445" width="4" height="7" stroke="#10a6ae" stroke-width="1" fill="none"/><path d="M916 457 L922 470 L930 470" stroke="#10a6ae" stroke-width="1" fill="none" /><path d="M935 469.5 L960 469.5" stroke="#10a6ae" stroke-width="1" fill="none" /><path d="M900 462.5 L925 462.5" stroke="#10a6ae" stroke-width="1" fill="none" /><ellipse cx="953" cy="449.5" rx="4.4" ry="17.5" transform="rotate(-13 953 449.5)" stroke="#10a6ae" fill="none"/><ellipse cx="953" cy="449.5" rx="2.4" ry="15.5" transform="rotate(-13 953 449.5)" stroke="#10a6ae" fill="none" opacity=".75"/><ellipse cx="975" cy="449.5" rx="4.4" ry="17.5" transform="rotate(-13 975 449.5)" stroke="#10a6ae" fill="none"/><ellipse cx="975" cy="449.5" rx="2.4" ry="15.5" transform="rotate(-13 975 449.5)" stroke="#10a6ae" fill="none" opacity=".75"/><ellipse cx="997" cy="449.5" rx="4.6" ry="17.5" transform="rotate(-13 997 449.5)" stroke="#10a6ae" fill="none"/><ellipse cx="997" cy="449.5" rx="2.6" ry="15.5" transform="rotate(-13 997 449.5)" stroke="#10a6ae" fill="none" opacity=".75"/><ellipse cx="1015" cy="449.5" rx="2.6" ry="17.5" transform="rotate(-13 1015 449.5)" stroke="#10a6ae" fill="none"/><ellipse cx="1015" cy="449.5" rx="0.8" ry="15.5" transform="rotate(-13 1015 449.5)" stroke="#10a6ae" fill="none" opacity=".75"/><ellipse cx="1028" cy="449.5" rx="4.4" ry="17.5" transform="rotate(-13 1028 449.5)" stroke="#10a6ae" fill="none"/><ellipse cx="1028" cy="449.5" rx="2.4" ry="15.5" transform="rotate(-13 1028 449.5)" stroke="#10a6ae" fill="none" opacity=".75"/><ellipse cx="1049" cy="449.5" rx="4.4" ry="17.5" transform="rotate(-13 1049 449.5)" stroke="#10a6ae" fill="none"/><ellipse cx="1049" cy="449.5" rx="2.4" ry="15.5" transform="rotate(-13 1049 449.5)" stroke="#10a6ae" fill="none" opacity=".75"/><path d="M946 432 q3 8 5 16 t4 18" stroke="#00ff00" fill="none"/><path d="M1054 432 q4 10 3 16 t-4 20" stroke="#00ff00" fill="none"/><path d="M853 448.5 L1273 448.5" stroke="#ff0000" stroke-width="1.2" fill="none" /><path d="M908.5 438 L908.5 470" stroke="#ff0000" stroke-width="1" fill="none" /><path d="M926.5 468 L926.5 480" stroke="#ff0000" stroke-width="1" fill="none" /><path d="M900 473.5 L922 473.5" stroke="#ff00ff" stroke-width="1" fill="none" /><path d="M1019.5 430 L1019.5 468" stroke="#ff0000" stroke-width="1" fill="none" /><path d="M950.5 429 L950.5 436" stroke="#ff0000" stroke-width="1" fill="none" /><path d="M972.5 429 L972.5 436" stroke="#ff0000" stroke-width="1" fill="none" /><path d="M1240.5 426 L1240.5 436" stroke="#ff0000" stroke-width="1" fill="none" /><rect x="1094" y="469" width="3" height="5" stroke="#ff0000" stroke-width="1" fill="none"/><rect x="1164" y="469" width="3" height="5" stroke="#ff0000" stroke-width="1" fill="none"/><path d="M983 426 L983 470.5" stroke="#ff00ff" stroke-width="2" fill="none" /><path d="M1079 426 L1079 470.5" stroke="#ff00ff" stroke-width="2" fill="none" /><path d="M1140 426 L1140 470.5" stroke="#ff00ff" stroke-width="2" fill="none" /><path d="M1202 426 L1202 470.5" stroke="#ff00ff" stroke-width="2" fill="none" /><path d="M895.5 444 L906 400.5 L913 400.5" stroke="#00ff00" stroke-width="1" fill="none" /><path d="M1005 437 L986 400.5 L979 400.5" stroke="#00ff00" stroke-width="1" fill="none" /><path d="M1053 434.5 L1054.5 400.5 L1062 400.5" stroke="#00ff00" stroke-width="1" fill="none" /><path d="M1132.5 440.5 L1141.5 400.5 L1149 400.5" stroke="#00ff00" stroke-width="1" fill="none" /><path d="M1217.5 442 L1201 400.5 L1194 400.5" stroke="#00ff00" stroke-width="1" fill="none" /><path d="M1177.5 439 L1160.5 499.5 L1143 499.5" stroke="#00ff00" stroke-width="1" fill="none" /><rect x="1173" y="437" width="10" height="6" stroke="#10a6ae" stroke-width="1" fill="none"/><path d="M927 474 L916 499.5 L877 499.5" stroke="#00ff00" stroke-width="1" fill="none" /><path d="M944 528 L960 499.5 L977 499.5" stroke="#00ff00" stroke-width="1" fill="none" /><path d="M1229.5 525.5 L1238 499.5 L1247 499.5" stroke="#00ff00" stroke-width="1" fill="none" /><text x="908" y="399" font-size="7" fill="#00ff00" text-anchor="start" >1</text><text x="981" y="398" font-size="7" fill="#00ff00" text-anchor="start" >2</text><text x="1057" y="398" font-size="7" fill="#00ff00" text-anchor="start" >3</text><text x="1144" y="398" font-size="7" fill="#00ff00" text-anchor="start" >4</text><text x="1195" y="398" font-size="7" fill="#00ff00" text-anchor="start" >5</text><text x="1241" y="498" font-size="7" fill="#00ff00" text-anchor="start" >6</text><text x="878" y="498" font-size="6.5" fill="#00ff00" text-anchor="start" textLength="38">16 15 14 13</text><text x="961" y="498" font-size="6.5" fill="#00ff00" text-anchor="start" textLength="15">12 11</text><text x="1145" y="498" font-size="6.5" fill="#00ff00" text-anchor="start" textLength="13">8  9</text><text x="971" y="419" font-size="7" fill="#00ff00" text-anchor="start" >3000</text><text x="1057" y="419" font-size="7" fill="#00ff00" text-anchor="start" textLength="18">3000</text><text x="1219" y="419" font-size="7" fill="#00ff00" text-anchor="start" >3000</text><text x="958" y="426" font-size="7" fill="#ffffff" text-anchor="start" >250</text><text x="916" y="427" font-size="6" fill="#00ff00" text-anchor="start" >398</text><text x="1246" y="423" font-size="6" fill="#00ff00" text-anchor="start" >200</text><text x="927" y="477" font-size="7" fill="#ffffff" text-anchor="start" >40</text><text x="938" y="477" font-size="6" fill="#00ff00" text-anchor="start" >250</text><text x="968" y="482" font-size="5" fill="#00ff00" text-anchor="start" >1500</text><text x="1052" y="482" font-size="5" fill="#00ff00" text-anchor="start" >3000</text><text x="1212" y="482" font-size="5" fill="#00ff00" text-anchor="start" >1500</text><text x="1250" y="478" font-size="7" fill="#ffffff" text-anchor="start" >60</text><text x="1087" y="414" font-size="5" fill="#00ff00" text-anchor="start" >8995</text><text x="946" y="462" font-size="6" fill="#00ff00" text-anchor="start" transform="rotate(-90 946 462)">244</text><text x="973" y="463" font-size="7" fill="#ffffff" text-anchor="start" transform="rotate(-90 973 463)">13</text><text x="1298" y="456" font-size="6" fill="#00ff00" text-anchor="start" transform="rotate(-90 1298 456)">344</text><text x="1288" y="465" font-size="6" fill="#00ff00" text-anchor="start" transform="rotate(-90 1288 465)">254</text><text x="1240" y="441" font-size="5" fill="#00ff00" text-anchor="start" transform="rotate(-90 1240 441)">240</text><text x="1016" y="465" font-size="6" fill="#ffffff" text-anchor="start" >70</text><path d="M1010 466 L1026 466 L1018 461 L1010 466" stroke="#00ff00" stroke-width="1" fill="none" /><text x="1010" y="475" font-size="5" fill="#00ff00" text-anchor="start" transform="rotate(-60 1010 475)">30</text><rect x="930.5" y="513.5" width="330" height="38" stroke="#10a6ae" stroke-width="1" fill="none"/><path d="M853 532.5 L1280 532.5" stroke="#ff0000" stroke-width="1.2" fill="none" /><path d="M983 508 L983 555" stroke="#ff00ff" stroke-width="2" fill="none" /><path d="M1079 508 L1079 555" stroke="#ff00ff" stroke-width="2" fill="none" /><path d="M1140 508 L1140 555" stroke="#ff00ff" stroke-width="2" fill="none" /><path d="M1202 508 L1202 555" stroke="#ff00ff" stroke-width="2" fill="none" /><circle cx="1019" cy="532.5" r="3.300" stroke="#10a6ae" fill="none" shape-rendering="auto"/><path d="M1019.5 526 L1019.5 540" stroke="#ff0000" stroke-width="1" fill="none" /><circle cx="1103" cy="532.5" r="3.300" stroke="#10a6ae" fill="none" shape-rendering="auto"/><path d="M1103.5 526 L1103.5 540" stroke="#ff0000" stroke-width="1" fill="none" /><circle cx="1172.5" cy="532.5" r="3.300" stroke="#10a6ae" fill="none" shape-rendering="auto"/><path d="M1173 526 L1173 540" stroke="#ff0000" stroke-width="1" fill="none" /><rect x="939.5" y="525.5" width="8.5" height="6.5" stroke="#10a6ae" stroke-width="1" fill="none"/><rect x="1261" y="520" width="16" height="16.5" stroke="#10a6ae" stroke-width="1" fill="none"/><path d="M1265.5 520 L1265.5 536" stroke="#10a6ae" stroke-width="1" fill="none" /><rect x="1261" y="526" width="3" height="12" stroke="#10a6ae" stroke-width="1" fill="#0a7f86"/><rect x="856" y="523" width="24" height="19" stroke="#10a6ae" stroke-width="1" fill="none"/><path d="M861 525.5 L880 525.5" stroke="#10a6ae" stroke-width="1" fill="none" /><path d="M861 528 L880 528" stroke="#10a6ae" stroke-width="1" fill="none" /><path d="M861 530.5 L880 530.5" stroke="#10a6ae" stroke-width="1" fill="none" /><path d="M861 533 L880 533" stroke="#10a6ae" stroke-width="1" fill="none" /><path d="M861 535.5 L880 535.5" stroke="#10a6ae" stroke-width="1" fill="none" /><path d="M861 538 L880 538" stroke="#10a6ae" stroke-width="1" fill="none" /><path d="M861 540.5 L880 540.5" stroke="#10a6ae" stroke-width="1" fill="none" /><path d="M860 523 L857 526 L857 539 L860 542" stroke="#10a6ae" stroke-width="1" fill="none" /><rect x="883" y="517.5" width="15" height="30" stroke="#10a6ae" stroke-width="1" fill="none"/><path d="M885.5 521 L885.5 544" stroke="#10a6ae" stroke-width="1" fill="none" /><path d="M888 521 L888 544" stroke="#10a6ae" stroke-width="1" fill="none" /><path d="M890.5 521 L890.5 544" stroke="#10a6ae" stroke-width="1" fill="none" /><rect x="891" y="521" width="3" height="23" stroke="#10a6ae" stroke-width="1" fill="#0a7f86"/><path d="M898 522 L904 527 L904 538 L898 543" stroke="#10a6ae" stroke-width="1" fill="none" /><rect x="906" y="522" width="8" height="21" stroke="#10a6ae" stroke-width="1" fill="none"/><rect x="913" y="525" width="3" height="15" stroke="#10a6ae" stroke-width="1" fill="#0a7f86"/><rect x="917" y="525" width="9" height="15" stroke="#10a6ae" stroke-width="1" fill="none"/><rect x="926" y="529" width="4" height="7" stroke="#10a6ae" stroke-width="1" fill="none"/><path d="M884.5 519.5 L887.5 519.5" stroke="#ff0000" stroke-width="1.5" fill="none" /><path d="M894.5 519.5 L897.5 519.5" stroke="#ff0000" stroke-width="1.5" fill="none" /><path d="M884.5 545.5 L887.5 545.5" stroke="#ff0000" stroke-width="1.5" fill="none" /><path d="M894.5 545.5 L897.5 545.5" stroke="#ff0000" stroke-width="1.5" fill="none" /><path d="M905.5 523 L908.5 523" stroke="#ff0000" stroke-width="1.5" fill="none" /><path d="M909.5 523 L912.5 523" stroke="#ff0000" stroke-width="1.5" fill="none" /><path d="M905.5 541.5 L908.5 541.5" stroke="#ff0000" stroke-width="1.5" fill="none" /><path d="M909.5 541.5 L912.5 541.5" stroke="#ff0000" stroke-width="1.5" fill="none" /><path d="M912 578.5 L904.5 578.5 L904.5 609.5 L912 609.5" stroke="#00ff00" stroke-width="1" fill="none" /><path d="M902 594.5 L906 594.5" stroke="#00ff00" stroke-width="1" fill="none" /><path d="M913 578.5 L955.5 578.5" stroke="#ff0000" stroke-width="1" fill="none" /><path d="M958 580.5 L1094.5 580.5" stroke="#ff0000" stroke-width="1" fill="none" /><path d="M912 594.5 L1094.5 594.5" stroke="#ff0000" stroke-width="1.2" fill="none" /><path d="M958 607.5 L1094 607.5" stroke="#ff0000" stroke-width="1" fill="none" /><path d="M913 609.5 L955 609.5" stroke="#ff0000" stroke-width="1" fill="none" /><path d="M919.5 571 L919.5 610" stroke="#ff0000" stroke-width="1" fill="none" /><path d="M919.5 610 L919.5 627" stroke="#00ff00" stroke-width="1" fill="none" /><path d="M944.5 571 L944.5 610" stroke="#ff0000" stroke-width="1" fill="none" /><path d="M944.5 610 L944.5 627" stroke="#00ff00" stroke-width="1" fill="none" /><path d="M965.5 571 L965.5 610" stroke="#ff0000" stroke-width="1" fill="none" /><path d="M965.5 610 L965.5 627" stroke="#00ff00" stroke-width="1" fill="none" /><path d="M989.5 571 L989.5 610" stroke="#ff0000" stroke-width="1" fill="none" /><path d="M989.5 610 L989.5 627" stroke="#00ff00" stroke-width="1" fill="none" /><path d="M1014.5 571 L1014.5 610" stroke="#ff0000" stroke-width="1" fill="none" /><path d="M1014.5 610 L1014.5 627" stroke="#00ff00" stroke-width="1" fill="none" /><path d="M1039.5 571 L1039.5 610" stroke="#ff0000" stroke-width="1" fill="none" /><path d="M1039.5 610 L1039.5 627" stroke="#00ff00" stroke-width="1" fill="none" /><path d="M1063.5 571 L1063.5 610" stroke="#ff0000" stroke-width="1" fill="none" /><path d="M1063.5 610 L1063.5 627" stroke="#00ff00" stroke-width="1" fill="none" /><path d="M1088.5 571 L1088.5 610" stroke="#ff0000" stroke-width="1" fill="none" /><path d="M1088.5 610 L1088.5 627" stroke="#00ff00" stroke-width="1" fill="none" /><path d="M919 623.5 L1089 623.5" stroke="#00ff00" stroke-width="1" fill="none" /><path d="M989.5 614 L989.5 617.5 L1014.5 617.5 L1014.5 614" stroke="#00ff00" stroke-width="1" fill="none" /><path d="M1002.5 615 L1002.5 618" stroke="#00ff00" stroke-width="1" fill="none" /><path d="M1026 578 L1026 611" stroke="#ff00ff" stroke-width="2" fill="none" /><path d="M1094 580.5 L1110 580.5" stroke="#00ff00" stroke-width="1" fill="none" /><path d="M1094 607.5 L1110 607.5" stroke="#00ff00" stroke-width="1" fill="none" /><path d="M1108.5 580 L1108.5 608" stroke="#00ff00" stroke-width="1" fill="none" /><circle cx="919.5" cy="578.5" r="1.500" stroke="#5a8a8a" fill="none" shape-rendering="auto"/><circle cx="919.5" cy="609.5" r="1.500" stroke="#5a8a8a" fill="none" shape-rendering="auto"/><circle cx="944.5" cy="578.5" r="1.500" stroke="#5a8a8a" fill="none" shape-rendering="auto"/><circle cx="944.5" cy="609.5" r="1.500" stroke="#5a8a8a" fill="none" shape-rendering="auto"/><text x="932.5" y="591" font-size="8" fill="#00ff00" text-anchor="middle" >g</text><text x="955" y="591" font-size="8" fill="#00ff00" text-anchor="middle" >h</text><text x="977.5" y="591" font-size="8" fill="#00ff00" text-anchor="middle" >l</text><text x="1049.5" y="591" font-size="8" fill="#00ff00" text-anchor="middle" >l</text><text x="1074.5" y="591" font-size="8" fill="#00ff00" text-anchor="middle" >l</text><text x="1012" y="591" font-size="8" fill="#00ff00" text-anchor="start" >L</text><path d="M1016 588.5 L1021 588.5" stroke="#ffff00" stroke-width="1.5" fill="none" /><path d="M1020.5 586 L1020.5 591" stroke="#00ff00" stroke-width="1" fill="none" /><text x="1027" y="591" font-size="7" fill="#00ff00" text-anchor="start" >Kn</text><text x="1049" y="606" font-size="4" fill="#00ff00" text-anchor="start" >a</text><text x="1075" y="606" font-size="4" fill="#00ff00" text-anchor="start" >a</text><text x="1104" y="598" font-size="5" fill="#00ff00" text-anchor="start" transform="rotate(-90 1104 598)">b</text><text x="882" y="646" font-size="6" fill="#00ff00" text-anchor="start" font-weight="bold" textLength="15" lengthAdjust="spacingAndGlyphs">出料口</text><path d="M886.5 653 L886.5 708" stroke="#ff0000" stroke-width="1" fill="none" /><path d="M886.5 718 L886.5 764" stroke="#ff0000" stroke-width="1" fill="none" /><path d="M884 671.5 L861 671.5" stroke="#00ff00" stroke-width="1" fill="none" /><path d="M863.5 671 L863.5 705" stroke="#00ff00" stroke-width="1" fill="none" /><path d="M861 705.5 L906 705.5" stroke="#00ff00" stroke-width="1" fill="none" /><path d="M872 684 L872 705" stroke="#10a6ae" stroke-width="2" fill="none" /><path d="M901 684 L901 705" stroke="#10a6ae" stroke-width="1.5" fill="none" /><path d="M871 704.5 L902 704.5" stroke="#10a6ae" stroke-width="2" fill="none" /><path d="M897.5 688 L897.5 705" stroke="#10a6ae" stroke-width="1" fill="none" /><path d="M873 686 q13 10 27 -1" stroke="#10a6ae" fill="none" shape-rendering="auto"/><path d="M875 686 L886 669" stroke="#00ff00" stroke-width="3" fill="none" stroke-dasharray="2 1"/><path d="M901.5 691.5 L910 678.5 L918 678.5" stroke="#00ff00" stroke-width="1" fill="none" /><text x="913" y="675" font-size="6" fill="#00ff00" text-anchor="start" >6</text><text x="858" y="692" font-size="4" fill="#00ff00" text-anchor="start" >60</text><path d="M869.5 702 L869.5 708" stroke="#ff0000" stroke-width="1" fill="none" /><path d="M903.5 702 L903.5 708" stroke="#ff0000" stroke-width="1" fill="none" /><rect x="866.5" y="723.5" width="39.5" height="39.5" stroke="#10a6ae" stroke-width="1" fill="none"/><rect x="871" y="727" width="30.5" height="31.5" stroke="#10a6ae" stroke-width="1.5" fill="none"/><rect x="868.5" y="725.5" width="35.5" height="35.5" stroke="#ff0000" stroke-width="1" fill="none"/><path d="M866 743.5 L906 743.5" stroke="#ff0000" stroke-width="1" fill="none" /><path d="M878.5 729 L878.5 757" stroke="#00ff00" stroke-width="1" fill="none" /><path d="M873 735.5 L899 735.5" stroke="#00ff00" stroke-width="1" fill="none" /><path d="M898 748.5 L908 748.5" stroke="#ff0000" stroke-width="1" fill="none" /><path d="M912.5 725 L912.5 760" stroke="#00ff00" stroke-width="1" fill="none" /><path d="M906 725.5 L914 725.5" stroke="#00ff00" stroke-width="1" fill="none" /><path d="M906 760.5 L914 760.5" stroke="#00ff00" stroke-width="1" fill="none" /><text x="845" y="731" font-size="5" fill="#00ff00" text-anchor="start" >8-Φ4</text><path d="M844 735.5 L860 735.5 L868 742" stroke="#00ff00" stroke-width="1" fill="none" /><text x="884" y="735" font-size="4" fill="#00ff00" text-anchor="start" >20</text><text x="908" y="746" font-size="4" fill="#00ff00" text-anchor="start" >24</text><text x="1033" y="648" font-size="6" fill="#00ff00" text-anchor="start" font-weight="bold" textLength="14" lengthAdjust="spacingAndGlyphs">进料口</text><text x="1004" y="673" font-size="6" fill="#00ff00" text-anchor="start" >7</text><path d="M1000 677.5 L1008 677.5 L1022 692" stroke="#00ff00" stroke-width="1" fill="none" /><path d="M1022 691.5 L1058 691.5" stroke="#10a6ae" stroke-width="1.5" fill="none" /><path d="M1022 705.5 L1058 705.5" stroke="#10a6ae" stroke-width="1.5" fill="none" /><path d="M1024 691 L1024 705" stroke="#10a6ae" stroke-width="2" fill="none" /><path d="M1053.5 691 L1053.5 705" stroke="#10a6ae" stroke-width="1" fill="none" /><path d="M1038.5 688 L1038.5 708" stroke="#ff0000" stroke-width="1" fill="none" /><path d="M1024 691.5 L1011 691.5" stroke="#00ff00" stroke-width="1" fill="none" /><path d="M1024 705.5 L1011 705.5" stroke="#00ff00" stroke-width="1" fill="none" /><path d="M1012.5 691 L1012.5 706" stroke="#00ff00" stroke-width="1" fill="none" /><text x="1009" y="700" font-size="4" fill="#00ff00" text-anchor="start" >P</text><rect x="1020.5" y="723.5" width="36.5" height="38.5" stroke="#10a6ae" stroke-width="1" fill="none"/><rect x="1024" y="727" width="29.5" height="31" stroke="#ffff00" stroke-width="1" fill="none"/><path d="M1021 725.5 L1057 725.5" stroke="#ff0000" stroke-width="1.5" fill="none" /><path d="M1021 760.5 L1057 760.5" stroke="#ff0000" stroke-width="1.5" fill="none" /><path d="M1022.5 723 L1022.5 762" stroke="#ff0000" stroke-width="1" fill="none" /><path d="M1055.5 723 L1055.5 762" stroke="#10a6ae" stroke-width="1" fill="none" /><path d="M1038.5 720 L1038.5 764" stroke="#ff0000" stroke-width="1" fill="none" /><path d="M1018 743.5 L1058 743.5" stroke="#ff0000" stroke-width="1" fill="none" /><path d="M1031.5 730 L1031.5 757" stroke="#00ff00" stroke-width="1" fill="none" /><path d="M1026 734.5 L1051 734.5" stroke="#00ff00" stroke-width="1" fill="none" /><path d="M1065.5 725 L1065.5 761" stroke="#00ff00" stroke-width="1" fill="none" /><path d="M1057 725.5 L1067 725.5" stroke="#00ff00" stroke-width="1" fill="none" /><path d="M1057 760.5 L1067 760.5" stroke="#00ff00" stroke-width="1" fill="none" /><path d="M1061.5 725 L1061.5 761" stroke="#00ff00" stroke-width="1" fill="none" /><text x="998" y="730" font-size="5" fill="#00ff00" text-anchor="start" >8-Φ4</text><path d="M996 735.5 L1012 735.5 L1024 745" stroke="#00ff00" stroke-width="1" fill="none" /><text x="1062" y="746" font-size="4" fill="#00ff00" text-anchor="start" >24</text><text x="1153" y="653" font-size="6" fill="#00ff00" text-anchor="start" font-weight="bold" textLength="16" lengthAdjust="spacingAndGlyphs">技术要求</text><text x="1106" y="661" font-size="6" fill="#00ff00" text-anchor="start" font-weight="bold" textLength="110" lengthAdjust="spacingAndGlyphs">1.输送机安装时各节机壳法兰间应垫石棉橡胶垫,</text><text x="1111" y="668" font-size="6" fill="#00ff00" text-anchor="start" font-weight="bold" textLength="76" lengthAdjust="spacingAndGlyphs">各轴承处加注润滑脂后方可试运转</text><text x="1106" y="675" font-size="6" fill="#00ff00" text-anchor="start" font-weight="bold" textLength="83" lengthAdjust="spacingAndGlyphs">2.空载试运转两小时,各部位运转平稳。</text><path d="M1231 660.5 L1358 660.5" stroke="#00ff00" stroke-width="1" fill="none" /><path d="M1231 665.5 L1358 665.5" stroke="#00ff00" stroke-width="1" fill="none" /><path d="M1231 671.5 L1358 671.5" stroke="#00ff00" stroke-width="1" fill="none" /><path d="M1231 677.5 L1358 677.5" stroke="#00ff00" stroke-width="1" fill="none" /><path d="M1231 683.5 L1358 683.5" stroke="#00ff00" stroke-width="1" fill="none" /><path d="M1231 689.5 L1358 689.5" stroke="#00ff00" stroke-width="1" fill="none" /><path d="M1231 695.5 L1358 695.5" stroke="#00ff00" stroke-width="1" fill="none" /><path d="M1231 701.5 L1358 701.5" stroke="#00ff00" stroke-width="1" fill="none" /><path d="M1231 707.5 L1358 707.5" stroke="#00ff00" stroke-width="1" fill="none" /><path d="M1231 713.5 L1358 713.5" stroke="#00ff00" stroke-width="1" fill="none" /><path d="M1231 719.5 L1358 719.5" stroke="#00ff00" stroke-width="1" fill="none" /><path d="M1231 725.5 L1358 725.5" stroke="#00ff00" stroke-width="1" fill="none" /><path d="M1231 731.5 L1358 731.5" stroke="#00ff00" stroke-width="1" fill="none" /><path d="M1231 737.5 L1358 737.5" stroke="#00ff00" stroke-width="1" fill="none" /><path d="M1231 743.5 L1358 743.5" stroke="#00ff00" stroke-width="1" fill="none" /><path d="M1231 749.5 L1358 749.5" stroke="#00ff00" stroke-width="1" fill="none" /><path d="M1231 755.5 L1358 755.5" stroke="#00ff00" stroke-width="1" fill="none" /><path d="M1231 761.5 L1358 761.5" stroke="#00ff00" stroke-width="1" fill="none" /><path d="M1231.5 659 L1231.5 765" stroke="#00ff00" stroke-width="1" fill="none" /><path d="M1240.5 659 L1240.5 765" stroke="#00ff00" stroke-width="1" fill="none" /><path d="M1268.5 659 L1268.5 765" stroke="#00ff00" stroke-width="1" fill="none" /><path d="M1306.5 659 L1306.5 765" stroke="#00ff00" stroke-width="1" fill="none" /><path d="M1316.5 659 L1316.5 765" stroke="#00ff00" stroke-width="1" fill="none" /><path d="M1330.5 659 L1330.5 765" stroke="#00ff00" stroke-width="1" fill="none" /><path d="M1339.5 659 L1339.5 765" stroke="#00ff00" stroke-width="1" fill="none" /><path d="M1348.5 659 L1348.5 765" stroke="#00ff00" stroke-width="1" fill="none" /><path d="M1235.5 659 L1235.5 765" stroke="#00ff00" stroke-width="2" fill="none" /><rect x="1241" y="661.5" width="9" height="3.5" stroke="#00ff00" stroke-width="0" fill="#00ff00"/><rect x="1269" y="661.5" width="15" height="3.5" stroke="#00ff00" stroke-width="0" fill="#00ff00"/><rect x="1307" y="661.5" width="6" height="3.5" stroke="#00ff00" stroke-width="0" fill="#00ff00"/><rect x="1331" y="661.5" width="5" height="3.5" stroke="#00ff00" stroke-width="0" fill="#00ff00"/><rect x="1241" y="666.5" width="9" height="3.5" stroke="#00ff00" stroke-width="0" fill="#00ff00"/><rect x="1269" y="666.5" width="11" height="3.5" stroke="#00ff00" stroke-width="0" fill="#00ff00"/><rect x="1307" y="666.5" width="6" height="3.5" stroke="#00ff00" stroke-width="0" fill="#00ff00"/><rect x="1331" y="666.5" width="5" height="3.5" stroke="#00ff00" stroke-width="0" fill="#00ff00"/><rect x="1241" y="672.5" width="11" height="3.5" stroke="#00ff00" stroke-width="0" fill="#00ff00"/><rect x="1269" y="672.5" width="16" height="3.5" stroke="#00ff00" stroke-width="0" fill="#00ff00"/><rect x="1307" y="672.5" width="6" height="3.5" stroke="#00ff00" stroke-width="0" fill="#00ff00"/><rect x="1331" y="672.5" width="5" height="3.5" stroke="#00ff00" stroke-width="0" fill="#00ff00"/><rect x="1241" y="678.5" width="8" height="3.5" stroke="#00ff00" stroke-width="0" fill="#00ff00"/><rect x="1269" y="678.5" width="15" height="3.5" stroke="#00ff00" stroke-width="0" fill="#00ff00"/><rect x="1307" y="678.5" width="2" height="3.5" stroke="#00ff00" stroke-width="0" fill="#00ff00"/><rect x="1331" y="678.5" width="5" height="3.5" stroke="#00ff00" stroke-width="0" fill="#00ff00"/><rect x="1241" y="684.5" width="11" height="3.5" stroke="#00ff00" stroke-width="0" fill="#00ff00"/><rect x="1269" y="684.5" width="10" height="3.5" stroke="#00ff00" stroke-width="0" fill="#00ff00"/><rect x="1307" y="684.5" width="6" height="3.5" stroke="#00ff00" stroke-width="0" fill="#00ff00"/><rect x="1241" y="690.5" width="9" height="3.5" stroke="#00ff00" stroke-width="0" fill="#00ff00"/><rect x="1269" y="690.5" width="9" height="3.5" stroke="#00ff00" stroke-width="0" fill="#00ff00"/><rect x="1307" y="690.5" width="5" height="3.5" stroke="#00ff00" stroke-width="0" fill="#00ff00"/><rect x="1241" y="696.5" width="12" height="3.5" stroke="#00ff00" stroke-width="0" fill="#00ff00"/><rect x="1269" y="696.5" width="14" height="3.5" stroke="#00ff00" stroke-width="0" fill="#00ff00"/><rect x="1307" y="696.5" width="5" height="3.5" stroke="#00ff00" stroke-width="0" fill="#00ff00"/><rect x="1241" y="702.5" width="11" height="3.5" stroke="#00ff00" stroke-width="0" fill="#00ff00"/><rect x="1269" y="702.5" width="16" height="3.5" stroke="#00ff00" stroke-width="0" fill="#00ff00"/><rect x="1307" y="702.5" width="3" height="3.5" stroke="#00ff00" stroke-width="0" fill="#00ff00"/><rect x="1241" y="708.5" width="9" height="3.5" stroke="#00ff00" stroke-width="0" fill="#00ff00"/><rect x="1269" y="708.5" width="16" height="3.5" stroke="#00ff00" stroke-width="0" fill="#00ff00"/><rect x="1307" y="708.5" width="3" height="3.5" stroke="#00ff00" stroke-width="0" fill="#00ff00"/><rect x="1318" y="708.5" width="6" height="3.5" stroke="#00ff00" stroke-width="0" fill="#00ff00"/><rect x="1241" y="714.5" width="12" height="3.5" stroke="#00ff00" stroke-width="0" fill="#00ff00"/><rect x="1269" y="714.5" width="12" height="3.5" stroke="#00ff00" stroke-width="0" fill="#00ff00"/><rect x="1318" y="714.5" width="6" height="3.5" stroke="#00ff00" stroke-width="0" fill="#00ff00"/><rect x="1241" y="720.5" width="13" height="3.5" stroke="#00ff00" stroke-width="0" fill="#00ff00"/><rect x="1269" y="720.5" width="6" height="3.5" stroke="#00ff00" stroke-width="0" fill="#00ff00"/><rect x="1318" y="720.5" width="6" height="3.5" stroke="#00ff00" stroke-width="0" fill="#00ff00"/><rect x="1241" y="726.5" width="13" height="3.5" stroke="#00ff00" stroke-width="0" fill="#00ff00"/><rect x="1269" y="726.5" width="7" height="3.5" stroke="#00ff00" stroke-width="0" fill="#00ff00"/><rect x="1318" y="726.5" width="6" height="3.5" stroke="#00ff00" stroke-width="0" fill="#00ff00"/><rect x="1241" y="732.5" width="9" height="3.5" stroke="#00ff00" stroke-width="0" fill="#00ff00"/><rect x="1269" y="732.5" width="15" height="3.5" stroke="#00ff00" stroke-width="0" fill="#00ff00"/><rect x="1318" y="732.5" width="6" height="3.5" stroke="#00ff00" stroke-width="0" fill="#00ff00"/><rect x="1286" y="759" width="14" height="4" stroke="#00ff00" stroke-width="0" fill="#00ff00"/><rect x="1333" y="759" width="17" height="4" stroke="#00ff00" stroke-width="0" fill="#00ff00"/><rect x="776" y="744" width="16" height="14" stroke="#00ff00" stroke-width="1" fill="none"/><rect x="779" y="746" width="12" height="2.5" stroke="#00ff00" stroke-width="0" fill="#00ff00"/><rect x="779" y="750" width="12" height="2.5" stroke="#00ff00" stroke-width="0" fill="#00ff00"/><rect x="779" y="754" width="12" height="2.5" stroke="#00ff00" stroke-width="0" fill="#00ff00"/><rect x="776" y="745" width="3" height="13" stroke="#00ff00" stroke-width="0" fill="#00ff00"/><rect x="680.5" y="744.5" width="8.5" height="8.5" stroke="#ffffff" stroke-width="1" fill="none"/><path d="M684.5 700 L684.5 745" stroke="#ffffff" stroke-width="1" fill="none" /><path d="M689 748.5 L730 748.5" stroke="#ffffff" stroke-width="1" fill="none" /><path d="M684.5 695 L681 705 L688 705 L684.5 695" stroke="#ffffff" stroke-width="1" fill="none" /><path d="M739 748.5 L729 745 L729 752 L739 748.5" stroke="#ffffff" stroke-width="1" fill="none" /><path d="M681 674 L685.5 680 L690 674" stroke="#ffffff" stroke-width="1" fill="none" shape-rendering="auto"/><path d="M685.5 680 L685.5 686" stroke="#ffffff" stroke-width="1" fill="none" /><path d="M749 743 L758 755" stroke="#ffffff" stroke-width="1" fill="none" shape-rendering="auto"/><path d="M758 743 L749 755" stroke="#ffffff" stroke-width="1" fill="none" shape-rendering="auto"/><path d="M1331 592.5 L1371 592.5" stroke="#ffffff" stroke-width="1" fill="none" /><path d="M1364 585.5 L1371 585.5" stroke="#ffffff" stroke-width="1" fill="none" /><path d="M1364 599.5 L1371 599.5" stroke="#ffffff" stroke-width="1" fill="none" /><path d="M1363.5 586 L1363.5 600" stroke="#ff00ff" stroke-width="1.5" fill="none" /></g></svg>
<!-- acadicons -->
<svg style="left:0;top:0" width="1600" height="900" viewBox="0 0 1600 900"><g><g transform="translate(652.5 0)"><path d="M-6 321 L6 309" stroke="#3a3a3a" stroke-width="1" fill="none" /><rect x="-7.5" y="319.5" width="3" height="3" stroke="#3a3a3a" stroke-width="1" fill="#fff"/><rect x="4.5" y="307.5" width="3" height="3" stroke="#3a3a3a" stroke-width="1" fill="#fff"/><path d="M-7 344 L7 330" stroke="#3a3a3a" stroke-width="1" fill="none" /><path d="M-7 344 v-4 M-7 344 h4 M7 330 v4 M7 330 h-4" stroke="#3a3a3a" stroke-width="1.5" fill="none" /><rect x="-1.5" y="335.5" width="3" height="3" stroke="#3a3a3a" stroke-width="1" fill="#fff"/><path d="M-6 364 h6 M0 364 q7 0 6 -6 t-5 -4" stroke="#3a3a3a" stroke-width="1" fill="none" /><rect x="-7.5" y="362.5" width="3" height="3" stroke="#3a3a3a" stroke-width="1" fill="#fff"/><rect x="-1.5" y="362.5" width="3" height="3" stroke="#3a3a3a" stroke-width="1" fill="#fff"/><rect x="0.5" y="352.5" width="3" height="3" stroke="#3a3a3a" stroke-width="1" fill="#fff"/><path d="M0 373.5 l7.500 5.500 -2.800 8.500 h-9.400 l-2.800 -8.500z" stroke="#3a3a3a" stroke-width="1" fill="#f4f4f4" /><path d="M-7 398.5 h14 v11 h-14z" stroke="#3a3a3a" stroke-width="1.2" fill="#dcdcdc" /><rect x="-8.5" y="408" width="3" height="3" stroke="#3a3a3a" stroke-width="1" fill="#fff"/><rect x="5.5" y="397" width="3" height="3" stroke="#3a3a3a" stroke-width="1" fill="#fff"/><path d="M-6 432 q1 -10 12 -12" stroke="#3a3a3a" stroke-width="1" fill="none" /><rect x="-7.5" y="430.5" width="3" height="3" stroke="#3a3a3a" stroke-width="1" fill="#fff"/><rect x="4.5" y="418.5" width="3" height="3" stroke="#3a3a3a" stroke-width="1" fill="#fff"/><rect x="-4.5" y="423.5" width="3" height="3" stroke="#3a3a3a" stroke-width="1" fill="#fff"/><circle cx="0" cy="447" r="7" stroke="#3a3a3a" fill="#f0f0f0"/><path d="M0 447 l5 -5" stroke="#3a3a3a" stroke-width="1" fill="none" /><rect x="-1.2" y="445.8" width="2.4" height="2.4" stroke="#3a3a3a" stroke-width="1" fill="#fff"/><path d="M-4 471 q-4 -4 0 -6 q2 -4 6 -1 q5 -1 4 4 q3 4 -1 6 q-2 4 -6 1 q-5 1 -3 -4z" stroke="#666" stroke-width="1.4" fill="#ededed" /><path d="M-7 498 q4 -12 8 -5 t6 -6" stroke="#3a3a3a" stroke-width="1.3" fill="none" /><ellipse cx="0" cy="513" rx="7" ry="4.500" stroke="#3a3a3a" fill="#ededed"/><rect x="-8.2" y="511.8" width="2.4" height="2.4" stroke="#3a3a3a" stroke-width="1" fill="#fff"/><rect x="5.8" y="511.8" width="2.4" height="2.4" stroke="#3a3a3a" stroke-width="1" fill="#fff"/><rect x="-1.2" y="507.3" width="2.4" height="2.4" stroke="#3a3a3a" stroke-width="1" fill="#fff"/><path d="M-6 537 q-2 -7 6 -7 t5 7 q-2 3 -5 2" stroke="#3a3a3a" stroke-width="1.2" fill="none" /><rect x="-7.2" y="535.8" width="2.4" height="2.4" stroke="#3a3a3a" stroke-width="1" fill="#fff"/><rect x="-1.2" y="537.8" width="2.4" height="2.4" stroke="#3a3a3a" stroke-width="1" fill="#fff"/><path d="M-2 550 h6 l3 3 v8 h-9z" stroke="#777" stroke-width="1" fill="#f8f8f8" /><path d="M-7 557 h11 v6 h-11z" stroke="#3a3a3a" stroke-width="1.2" fill="#e0e0e0" /><circle cx="-4" cy="564" r="1.800" stroke="#3a3a3a" fill="#fff"/><circle cx="3" cy="563" r="2.500" stroke="#3a3a3a" fill="#eee"/><path d="M4 566 l4 0 0 -4z" stroke="#000" stroke-width="0" fill="#000" /><path d="M-7 575 h11 v7 h-11z" stroke="#3a3a3a" stroke-width="1.2" fill="#e6e6e6" /><circle cx="-4" cy="583" r="1.800" stroke="#3a3a3a" fill="#fff"/><circle cx="4.500" cy="583" r="3.200" stroke="#3a3a3a" fill="#eee"/><rect x="-1.2" y="599.8" width="2.4" height="2.4" stroke="#3a3a3a" stroke-width="1" fill="#fff"/><path d="M-6 618 h12 v12 h-12z" stroke="#3a3a3a" stroke-width="1" fill="#d8d8d8" /><path d="M-6 630 l12 -12 M-6 624 l6 -6 M0 630 l6 -6 M-3 630 l9 -9 M-6 627 l9 -9" stroke="#555" stroke-width="0.8" fill="none" /><path d="M-8 618 h16 M-8 630 h16 M-6 616 v16 M6 616 v16" stroke="#3a3a3a" stroke-width="1" fill="none" /><defs><linearGradient id="lgr" x1="0" y1="0" x2="1" y2="1"><stop offset="0" stop-color="#444"/><stop offset="1" stop-color="#eee"/></linearGradient></defs><path d="M-6 640 h12 v12 h-12z" stroke="#3a3a3a" stroke-width="1" fill="url(#lgr)" /><path d="M-8 640 h16 M-8 652 h16 M-6 638 v16 M6 638 v16" stroke="#3a3a3a" stroke-width="1" fill="none" /><path d="M-7 661 h10 l4 4 v8 h-14z" stroke="#3a3a3a" stroke-width="1.2" fill="#e2e2e2" /><circle cx="-1" cy="668" r="3.300" stroke="#3a3a3a" fill="#fff"/><path d="M-7 683 h14 v14 h-14z" stroke="#3a3a3a" stroke-width="1.2" fill="#fff" /><path d="M-7 686 h14" stroke="#888" stroke-width="3" fill="none" /><path d="M-7 688.5 h14 M-7 691.5 h14 M-7 694.5 h14 M-2.500 687 v11 M2.500 687 v11" stroke="#888" stroke-width="1" fill="none" /></g><text x="644" y="719.500" font-size="20" fill="#2a2a2a" textLength="17" lengthAdjust="spacingAndGlyphs">A</text><g transform="translate(1407.5 0)"><path d="M-3 319 l9 -10" stroke="#b8863c" stroke-width="3.5" fill="none" /><path d="M-5 321 l3 -3" stroke="#c23a1a" stroke-width="3.5" fill="none" /><path d="M-8 323.5 h14" stroke="#555" stroke-width="1" fill="none" /><circle cx="-4" cy="333" r="3" stroke="#555" fill="#fff"/><circle cx="1" cy="340" r="3.200" stroke="#2f78c8" fill="#cfe6f7"/><circle cx="3.500" cy="343" r="3.200" stroke="#2f78c8" fill="#cfe6f7"/><path d="M1 332 q5 -1 5 3 M4 334 l2 2 2-2" stroke="#3a3a3a" stroke-width="1" fill="none" /><path d="M-2 353 v14" stroke="#3a3a3a" stroke-width="1" fill="none" /><path d="M-3.500 355 v11 h-4.500z" stroke="#3a3a3a" stroke-width="1" fill="#f4f4f4" /><path d="M1.500 355 v11 h4.500z" stroke="#2f78c8" stroke-width="1" fill="#cfe6f7" /><path d="M-7 389 h14 v-3 q0 -3 -3 -3 q0 -5 -5 -5 t-4 5 q-3 1 -2 6z" stroke="#2f78c8" stroke-width="1.3" fill="#cfe6f7" /><path d="M-4.500 386.5 h9 q0 -3 -2 -3 q0 -4 -3 -4 t-3 4 q-2 1 -1 3z" stroke="#1d4f8c" stroke-width="1" fill="#fff" /><rect x="-7" y="397" width="6" height="6" stroke="#2f78c8" fill="#fff"/><rect x="1" y="397" width="6" height="6" stroke="#2f78c8" fill="#cfe6f7"/><rect x="-7" y="405" width="6" height="6" stroke="#2f78c8" fill="#cfe6f7"/><rect x="1" y="405" width="6" height="6" stroke="#2f78c8" fill="#cfe6f7"/><path d="M-8 426 h16 M0 418 v16" stroke="#3a3a3a" stroke-width="1.2" fill="none" /><path d="M-8 426 l3 -3 v6z M8 426 l-3 -3 v6z M0 418 l-3 3 h6z M0 434 l-3 -3 h6z" stroke="#3a3a3a" stroke-width="0.5" fill="#3a3a3a" /><rect x="-2" y="424" width="4" height="4" stroke="#3a3a3a" stroke-width="1" fill="#fff"/><circle cx="0" cy="449" r="6.500" stroke="#555" stroke-width="1.400" fill="none"/><path d="M-1 440 l5 1.500 -4 3z" stroke="#3a3a3a" stroke-width="0.5" fill="#3a3a3a" /><path d="M-7 462.5 h14 v14 h-3" stroke="#2f78c8" stroke-width="1.4" fill="#cfe6f7" /><path d="M-7 470 h7 v7 h-7z" stroke="#3a3a3a" stroke-width="1.2" fill="#fff" /><path d="M-7 485.5 h9 l5 13 h-14z" stroke="#3a3a3a" stroke-width="1.2" fill="#fff" /><path d="M2 485.5 l5 13 h-5z" stroke="#2f78c8" stroke-width="1" fill="#cfe6f7" /><path d="M-5 494 h6 M-1 491.5 l2.500 2.500 -2.500 2.500" stroke="#000" stroke-width="1.2" fill="none" /><path d="M-8 514 h5 M-1 514 h2 M3 514 h5" stroke="#2f78c8" stroke-width="1.2" fill="none" /><path d="M-3 520 l6 -12" stroke="#2f78c8" stroke-width="1.3" fill="none" /><path d="M-8 536 h3 M-3 536 h3 M2 536 h2" stroke="#222" stroke-width="1.3" fill="none" /><path d="M2 542 l6 -12" stroke="#2f78c8" stroke-width="1.3" fill="none" /><path d="M-7 563 v-10 h9 M-7 563.5 h13" stroke="#3a3a3a" stroke-width="1.3" fill="none" /><path d="M-7 553 h14 v11 h-14z" stroke="none" stroke-width="0" fill="#f0f0f0" /><path d="M-7 563 v-10 h9" stroke="#3a3a3a" stroke-width="1.3" fill="none" /><path d="M3 553 h5" stroke="#2f78c8" stroke-width="1.3" fill="none" /><rect x="2" y="551.5" width="3" height="3" stroke="#2f78c8" stroke-width="1" fill="#2f78c8"/><path d="M-7 576 v10 h14 v-10" stroke="#3a3a3a" stroke-width="1.3" fill="#efefef" /><path d="M-7 575 h4 M3 575 h4" stroke="#3a3a3a" stroke-width="1.3" fill="none" /><rect x="-4.5" y="573.5" width="3" height="3" stroke="#2f78c8" stroke-width="1" fill="#2f78c8"/><rect x="1.5" y="573.5" width="3" height="3" stroke="#2f78c8" stroke-width="1" fill="#2f78c8"/><path d="M-8 601 h16" stroke="#2f78c8" stroke-width="1.2" fill="none" /><path d="M-5 598.5 l4 2.500 -4 2.500z M5 598.5 l-4 2.500 4 2.500z" stroke="#2f78c8" stroke-width="0.5" fill="#2f78c8" /><path d="M-7 630.5 v-7 l8 -7 h6 v14" stroke="#555" stroke-width="1.3" fill="#f0f0f0" /><path d="M-7 630.5 h14" stroke="#3a3a3a" stroke-width="1" fill="none" /><path d="M-7 652.5 v-4 q0 -9 10 -10 h4 v14" stroke="#555" stroke-width="1.3" fill="#f0f0f0" /><path d="M-7 652.5 h14" stroke="#3a3a3a" stroke-width="1" fill="none" /><path d="M-7 667 h9 v7 h-9z M-7 667 l4 -4 h9 l-4 4 M2 674 l4 -4 v-7" stroke="#2f78c8" stroke-width="1.3" fill="#cfe6f7" /><path d="M-4 669 h5 v4 h-5z" stroke="#2f78c8" stroke-width="1" fill="#fff" /></g><rect x="645" y="299" width="1" height="1" fill="#222"/><rect x="645" y="301" width="1" height="1" fill="#222"/><rect x="647" y="299" width="1" height="1" fill="#222"/><rect x="647" y="301" width="1" height="1" fill="#222"/><rect x="649" y="299" width="1" height="1" fill="#222"/><rect x="649" y="301" width="1" height="1" fill="#222"/><rect x="651" y="299" width="1" height="1" fill="#222"/><rect x="651" y="301" width="1" height="1" fill="#222"/><rect x="653" y="299" width="1" height="1" fill="#222"/><rect x="653" y="301" width="1" height="1" fill="#222"/><rect x="655" y="299" width="1" height="1" fill="#222"/><rect x="655" y="301" width="1" height="1" fill="#222"/><rect x="657" y="299" width="1" height="1" fill="#222"/><rect x="657" y="301" width="1" height="1" fill="#222"/><rect x="659" y="299" width="1" height="1" fill="#222"/><rect x="659" y="301" width="1" height="1" fill="#222"/><rect x="1400" y="299" width="1" height="1" fill="#222"/><rect x="1400" y="301" width="1" height="1" fill="#222"/><rect x="1402" y="299" width="1" height="1" fill="#222"/><rect x="1402" y="301" width="1" height="1" fill="#222"/><rect x="1404" y="299" width="1" height="1" fill="#222"/><rect x="1404" y="301" width="1" height="1" fill="#222"/><rect x="1406" y="299" width="1" height="1" fill="#222"/><rect x="1406" y="301" width="1" height="1" fill="#222"/><rect x="1408" y="299" width="1" height="1" fill="#222"/><rect x="1408" y="301" width="1" height="1" fill="#222"/><rect x="1410" y="299" width="1" height="1" fill="#222"/><rect x="1410" y="301" width="1" height="1" fill="#222"/><rect x="1412" y="299" width="1" height="1" fill="#222"/><rect x="1412" y="301" width="1" height="1" fill="#222"/><rect x="1414" y="299" width="1" height="1" fill="#222"/><rect x="1414" y="301" width="1" height="1" fill="#222"/><path d="M718 765 L733 765 L739 782 L762 782 L771 765 Z" stroke="#000" stroke-width="0" fill="#000" /><path d="M771 782 L777 765.500 L830 765.500 L823 782" stroke="#555" stroke-width="1" fill="#ece9d8" /><path d="M675.5 769v8M677.5 773l5-4v8z" stroke="#a8a595" stroke-width="1" fill="#a8a595" /><path d="M691.5 773l5-4v8z" stroke="#a8a595" stroke-width="1" fill="#a8a595" /><path d="M707.5 769v8l5-4z" stroke="#a8a595" stroke-width="1" fill="#a8a595" /><path d="M721.5 769v8l5-4zM728 769v8" stroke="#a8a595" stroke-width="1" fill="#a8a595" /><path d="M1377.5 309.5 l4 -4 4 4" stroke="#4d6185" stroke-width="2" fill="none" /><path d="M1377.5 754 l4 4 4 -4" stroke="#4d6185" stroke-width="2" fill="none" /><path d="M1378 322.500h7M1378 324.500h7M1378 326.500h7M1378 328.500h7" stroke="#8ea6dc" stroke-width="1" fill="none" /><path d="M1149 769.5 l-4 4 4 4" stroke="#4d6185" stroke-width="2" fill="none" /><path d="M1362 769.5 l4 4 -4 4" stroke="#4d6185" stroke-width="2" fill="none" /><path d="M1162.500 770v7M1164.500 770v7M1166.500 770v7M1168.500 770v7" stroke="#8ea6dc" stroke-width="1" fill="none" /><path d="M1410.5 796 l4 -4 4 4" stroke="#4d6185" stroke-width="2" fill="none" /><path d="M1410.5 813 l4 4 4 -4" stroke="#4d6185" stroke-width="2" fill="none" /><path d="M1349.5 831 l-4 4 4 4" stroke="#4d6185" stroke-width="2" fill="none" /><path d="M1395.5 831 l4 4 -4 4" stroke="#4d6185" stroke-width="2" fill="none" /><path d="M1361.500 832v6M1363.500 832v6M1365.500 832v6M1367.500 832v6" stroke="#8ea6dc" stroke-width="1" fill="none" /><path d="M1372.500 553v80" stroke="#000" stroke-width="2" fill="none" /><path d="M1364 585.500h9M1364 599.500h9M1331 592.500h41" stroke="#fff" stroke-width="1" fill="none" /><path d="M958.5 277.500 l4 4 4 -4" stroke="#4d6185" stroke-width="2" fill="none" /><path d="M1188.5 277.500 l4 4 4 -4" stroke="#4d6185" stroke-width="2" fill="none" /><path d="M1354.5 277.500 l4 4 4 -4" stroke="#4d6185" stroke-width="2" fill="none" /><path d="M1212 280.500h20m2 0h2m2 0h20m2 0h2m2 0h8" stroke="#000" stroke-width="1" fill="none" /><path d="M1378 280.500h32" stroke="#000" stroke-width="1" fill="none" /></g></svg>
<!-- acadtop -->
<svg style="left:0;top:0" width="1600" height="900" viewBox="0 0 1600 900"><g><path d="M690.5 180 h9 l4 4 v9 h-13z" stroke="#333" stroke-width="1.2" fill="#f3f3f3" /><path d="M699.5 180 v4 h4" stroke="#333" stroke-width="1" fill="none" /><path d="M712 191.5 v-10 h4 l1.500 2 h6 v3" stroke="#333" stroke-width="1.2" fill="#e9e9e9" /><path d="M712 192 l3 -7 h12 l-3.500 7z" stroke="#333" stroke-width="1.2" fill="#cfd6e0" /><path d="M736 180 h13 v13 h-13z" stroke="#3c4456" stroke-width="1.4" fill="#6c768e" /><path d="M738.5 180.5 h8 v5 h-8z" stroke="#3c4456" stroke-width="0.8" fill="#f2f2f2" /><path d="M739 188.5 h7 v4.500 h-7z" stroke="#3c4456" stroke-width="0.8" fill="#e4e4e4" /><path d="M744 189.5 v3" stroke="#333" stroke-width="1.5" fill="none" /><path d="M757 185.5 l6 -5.500 v3.500 q8 0 7.500 9 h-3 q0 -5 -4.500 -5 v3.500z" stroke="#333" stroke-width="1.2" fill="#fff" /><path d="M777.5 186 h5 l-2.5 2.5 z" stroke="#3a3a3a" stroke-width="0" fill="#3a3a3a" /><path d="M805 185.5 l-6 -5.500 v3.500 q-8 0 -7.500 9 h3 q0 -5 4.500 -5 v3.500z" stroke="#9c9c9c" stroke-width="1.2" fill="#c2c2c2" /><path d="M810 186 h5 l-2.5 2.5 z" stroke="#9a9a9a" stroke-width="0" fill="#9a9a9a" /><path d="M824.5 179 h10 v5 h-10z" stroke="#2a2a2a" stroke-width="1.2" fill="#fff" /><path d="M821.5 185.5 q0 -2 2 -2 h12 q2 0 2 2 v6 h-16z" stroke="#2a2a2a" stroke-width="1.2" fill="#e6e6e6" /><path d="M824.5 189.5 h10 v4 h-10z" stroke="#2a2a2a" stroke-width="1.2" fill="#fff" /><path d="M844.500 182h7" stroke="#111" stroke-width="1.5" fill="none" /><path d="M844.5 186 h7 l-3.5 3.5 z" stroke="#111" stroke-width="0" fill="#111" /><path d="M1211.500 180.500 l4 4 -4 4z" stroke="#111" stroke-width="0" fill="#111" /><path d="M1226 181.500l1-3.500h3l1 3.500v4l.5 6h-6.500l.5-6z M1234 181.500l1-3.500h3l1 3.500v4l.5 6h-6.500l.5-6z" stroke="#111" stroke-width="1" fill="#f2f2f2" /><path d="M1230.500 182.500h4v3h-4z" stroke="#111" stroke-width="1" fill="#ccc" /><path d="M1225.500 188.500h6M1233.500 188.500h6" stroke="#111" stroke-width="1" fill="none" /><path d="M1244.5 184 h5 l-2.5 2.5 z" stroke="#2a2a2a" stroke-width="0" fill="#2a2a2a" /><path d="M1262 183.500l8.500 7.500" stroke="#111" stroke-width="4.6" fill="none" stroke-linecap="round"/><path d="M1262 183.500l8.500 7.500" stroke="#f2f2f2" stroke-width="2.6" fill="none" stroke-linecap="round"/><circle cx="1259.500" cy="181" r="4.300" stroke="#111" stroke-width="1" fill="#f2f2f2"/><circle cx="1258.500" cy="180" r="1.300" fill="#444"/><path d="M1279.500 179.500q1.500 7 10.500 8.500q-1-7.500-10.500-8.500z" stroke="#111" stroke-width="1" fill="#f2f2f2" /><path d="M1284.500 183.500l6-6" stroke="#111" stroke-width="1.3" fill="none" /><path d="M1285 187l-1 2.500h-3.500l-1.500 3h12l-2-3h-2.500z" stroke="#111" stroke-width="1" fill="#e8e8e8" /><path d="M1309 177l2 5.200 5.500 .3-4.300 3.500 1.500 5.500-4.700-3.100-4.700 3.100 1.500-5.500-4.300-3.500 5.500-.3z" stroke="#111" stroke-width="1.3" fill="#f4f4f4" /><circle cx="1332" cy="184.500" r="7.800" stroke="#111" stroke-width="1.200" fill="#f4f4f4"/><text x="1328.300" y="189.500" font-size="13" font-weight="bold" fill="#111">?</text><path d="M1346 184 h4 l-2 2 z" stroke="#333" stroke-width="0" fill="#333" /><path d="M1374.500 187.5 h11" stroke="#e0e0e0" stroke-width="3.4" fill="none" /><path d="M1392.500 180.5 h9.500 v7.500 h-9.500z" stroke="#e4e4e4" stroke-width="2.4" fill="none" /><path d="M1408.500 180.5 l9 8.500 M1417.500 180.5 l-9 8.500" stroke="#ececec" stroke-width="3" fill="none" /><path d="M1374.500 212.5 h11" stroke="#e0e0e0" stroke-width="3.4" fill="none" /><path d="M1395.500 204 h7 v6.500 M1392.500 206.5 h7 v7 h-7z" stroke="#e4e4e4" stroke-width="2.2" fill="none" /><path d="M1408.500 205.5 l9 8.500 M1417.500 205.5 l-9 8.500" stroke="#ececec" stroke-width="3" fill="none" /><path d="M653.5 246.5 h9 l4 4 v9 h-13z" stroke="#3a3a3a" stroke-width="1.2" fill="#f6f6f6" /><path d="M662.5 246.5 v4 h4" stroke="#3a3a3a" stroke-width="1" fill="none" /><path d="M676 258 v-10 h4 l1.500 2 h6 v3" stroke="#3a3a3a" stroke-width="1.2" fill="#e9e9e9" /><path d="M676 258.5 l3 -7 h12 l-3.500 7z" stroke="#3a3a3a" stroke-width="1.2" fill="#cfd6e0" /><path d="M699.5 246.5 h13 v13 h-13z" stroke="#3c4456" stroke-width="1.4" fill="#6c768e" /><path d="M702 247 h8 v5 h-8z" stroke="#3c4456" stroke-width="0.8" fill="#f2f2f2" /><path d="M702.5 255 h7 v4.500 h-7z" stroke="#3c4456" stroke-width="0.8" fill="#e4e4e4" /><path d="M707.5 256 v3" stroke="#333" stroke-width="1.5" fill="none" /><path d="M720.5 245v16" stroke="#cfcfcf" stroke-width="1" fill="none" /><path d="M721.5 245v16" stroke="#fff" stroke-width="1" fill="none" /><path d="M819.5 245v16" stroke="#cfcfcf" stroke-width="1" fill="none" /><path d="M820.5 245v16" stroke="#fff" stroke-width="1" fill="none" /><path d="M940.5 245v16" stroke="#cfcfcf" stroke-width="1" fill="none" /><path d="M941.5 245v16" stroke="#fff" stroke-width="1" fill="none" /><path d="M1017.5 245v16" stroke="#cfcfcf" stroke-width="1" fill="none" /><path d="M1018.5 245v16" stroke="#fff" stroke-width="1" fill="none" /><path d="M1115.5 245v16" stroke="#cfcfcf" stroke-width="1" fill="none" /><path d="M1116.5 245v16" stroke="#fff" stroke-width="1" fill="none" /><path d="M1259.5 245v16" stroke="#cfcfcf" stroke-width="1" fill="none" /><path d="M1260.5 245v16" stroke="#fff" stroke-width="1" fill="none" /><path d="M730 245.5 h10 v5 h-10z" stroke="#3a3a3a" stroke-width="1.2" fill="#fff" /><path d="M727 252 q0 -2 2 -2 h12 q2 0 2 2 v6 h-16z" stroke="#3a3a3a" stroke-width="1.2" fill="#e6e6e6" /><path d="M730 256 h10 v4 h-10z" stroke="#3a3a3a" stroke-width="1.2" fill="#fff" /><path d="M753 246h8l3 3v11h-11z" stroke="#3a3a3a" stroke-width="1" fill="#fff" /><circle cx="759" cy="254" r="3.500" stroke="#333" stroke-width="1.200" fill="#eef4fa"/><path d="M761.500 257l3.500 3.500" stroke="#333" stroke-width="2" fill="none" /><path d="M776 246h8v4h-8z" stroke="#3a3a3a" stroke-width="1" fill="#fff" /><path d="M773.500 252q0-1.500 1.500-1.500h10q1.500 0 1.500 1.500v4.500h-13z" stroke="#3a3a3a" stroke-width="1" fill="#e6e6e6" /><path d="M776 255h8v4h-8z" stroke="#3a3a3a" stroke-width="1" fill="#fff" /><path d="M782 258.500h5v-2.500l4 3.500-4 3.500v-2.500h-5z" stroke="#1d5fae" stroke-width="0.6" fill="#2f78c8" /><path d="M797 250l6-3.500 6 3.500v7l-6 3.500-6-3.500z" stroke="#3a3a3a" stroke-width="1" fill="#f1f1f1" /><circle cx="806" cy="251.500" r="5" stroke="#2a7ab8" fill="#7fc4ea"/><path d="M803 249q3-2 6 0q-1 3-3 3t-3-3z" stroke="#c8741a" stroke-width="0.5" fill="#e89a3a" /><path d="M827 246l9 11M837 246l-9 11" stroke="#3a3a3a" stroke-width="1.6" fill="none" /><circle cx="828" cy="259" r="2.200" stroke="#3a3a3a" stroke-width="1.300" fill="#fff"/><circle cx="836" cy="259" r="2.200" stroke="#3a3a3a" stroke-width="1.300" fill="#fff"/><path d="M850 246h7l2 2v9h-9z" stroke="#3a3a3a" stroke-width="1.1" fill="#fff" /><path d="M854 250h7l2 2v9h-9z" stroke="#3a3a3a" stroke-width="1.1" fill="#f6f6f6" /><path d="M873 247.500h10v11h-10z" stroke="#555" stroke-width="1.1" fill="#bdbdbd" /><path d="M876 246h4v2.500h-4z" stroke="#3a3a3a" stroke-width="1" fill="#ddd" /><path d="M878 251h6l2 2v8h-8z" stroke="#3a3a3a" stroke-width="1.1" fill="#fff" /><path d="M895.500 246h11v12h-11z" stroke="#3a3a3a" stroke-width="1.1" fill="#fff" /><path d="M897 248h5v4h-5z" stroke="#1d4f8c" stroke-width="0.6" fill="#2b5fa8" /><path d="M903 248h2v4h-2z" stroke="#7fb0e0" stroke-width="0" fill="#7fb0e0" /><path d="M901 260l7-6" stroke="#b8863c" stroke-width="3" fill="none" /><path d="M899.500 261l2.500-2" stroke="#c23a1a" stroke-width="3" fill="none" /><path d="M918 254h9v6h-9z" stroke="#3a3a3a" stroke-width="1.1" fill="#e8e8e8" /><circle cx="920" cy="260" r="1.500" stroke="#3a3a3a" fill="#fff"/><circle cx="929" cy="257" r="2.800" stroke="#3a3a3a" fill="#eee"/><path d="M926 246l-2 4h3l-2.500 4 6-5.500h-3l2-2.500z" stroke="#c87a10" stroke-width="0.5" fill="#f5a623" /><path d="M947 252 l6 -5.500 v3.500 q8 0 7.500 9 h-3 q0 -5 -4.500 -5 v3.500z" stroke="#3a3a3a" stroke-width="1.2" fill="#fff" /><path d="M969 252.5 h6 l-3 3 z" stroke="#222" stroke-width="0" fill="#222" /><path d="M998 252 l-6 -5.500 v3.500 q-8 0 -7.500 9 h3 q0 -5 4.500 -5 v3.500z" stroke="#b4b4b4" stroke-width="1.2" fill="#f6f6f6" /><path d="M1005 252.5 h6 l-3 3 z" stroke="#aaa" stroke-width="0" fill="#aaa" /><path d="M1024 251 l5 2.500M1023.5 254 l5.500 2M1025 257 l5 1.500" stroke="#555" stroke-width="3.4" fill="none" stroke-linecap="round"/><path d="M1024 251 l5 2.500M1023.5 254 l5.500 2M1025 257 l5 1.500" stroke="#dcdcdc" stroke-width="1.8" fill="none" stroke-linecap="round"/><path d="M1030 253 q3-2 6 0q2 3 0 6.500q-3 3-7 1.500q-4-1.500-5.500-4l2-1.500 2.500 1z" stroke="#555" stroke-width="1" fill="#d6d6d6" /><path d="M1036.500 244.500v6M1033.500 247.500h6" stroke="#111" stroke-width="1.3" fill="none" /><circle cx="1052" cy="251" r="5.5" stroke="#555" stroke-width="1.300" fill="#f4f8fc"/><path d="M1056 255 l5 5" stroke="#444" stroke-width="2.6" fill="none" /><circle cx="1076" cy="251" r="6" stroke="#555" stroke-width="1.200" fill="#f4f8fc"/><path d="M1072.500 247.500h7v7h-7z" stroke="#444" stroke-width="1.1" fill="#dfe6ee" /><path d="M1080.500 255.500l4.500 4.500" stroke="#444" stroke-width="2.4" fill="none" /><path d="M1087 257v4h-4z" stroke="#000" stroke-width="0" fill="#000" /><circle cx="1098.500" cy="251.500" r="5.500" stroke="#555" stroke-width="1.200" fill="#f4f8fc"/><path d="M1102 256l5 5" stroke="#444" stroke-width="2.4" fill="none" /><path d="M1101 247q5 0 4.500 6M1103.500 245l-3 2.500 3.500 2" stroke="#111" stroke-width="1.3" fill="none" /><path d="M1123.500 246h11v14h-11z" stroke="#2b4f88" stroke-width="1.2" fill="#fff" /><path d="M1125.500 248h5v4h-5z" stroke="#2b5fa8" stroke-width="0" fill="#2b5fa8" /><path d="M1131.500 248h2v4h-2z" stroke="#8fb8e6" stroke-width="0" fill="#8fb8e6" /><path d="M1126 256.500h6M1126 256.500l2-1.500M1126 256.500l2 1.500" stroke="#2b4f88" stroke-width="1" fill="none" /><path d="M1146.500 246h4v14h-4z" stroke="#444" stroke-width="1" fill="#f4f4f4" /><path d="M1150.500 246h9v14h-9z" stroke="#444" stroke-width="1" fill="#fff" /><rect x="1152" y="248" width="2.500" height="2.500" stroke="#555" stroke-width=".7" fill="#e8e8e8"/><rect x="1156" y="248" width="2.500" height="2.500" stroke="#555" stroke-width=".7" fill="#e8e8e8"/><rect x="1152" y="252" width="2.500" height="2.500" stroke="#555" stroke-width=".7" fill="#e8e8e8"/><rect x="1156" y="252" width="2.500" height="2.500" stroke="#555" stroke-width=".7" fill="#e8e8e8"/><path d="M1153 256h5v2.500h-5z" stroke="#555" stroke-width="0.7" fill="#999" /><path d="M1169.500 246.500h9v14h-9z" stroke="#444" stroke-width="1" fill="#fff" /><path d="M1178.500 246.500h3v8h-3z" stroke="#444" stroke-width="1" fill="#ddd" /><rect x="1171" y="248.5" width="1.600" height="1.600" fill="#777"/><rect x="1173.6" y="248.5" width="1.600" height="1.600" fill="#777"/><rect x="1176.2" y="248.5" width="1.600" height="1.600" fill="#777"/><rect x="1171" y="251.5" width="1.600" height="1.600" fill="#777"/><rect x="1173.6" y="251.5" width="1.600" height="1.600" fill="#777"/><rect x="1176.2" y="251.5" width="1.600" height="1.600" fill="#777"/><rect x="1171" y="254.5" width="1.600" height="1.600" fill="#777"/><rect x="1173.6" y="254.5" width="1.600" height="1.600" fill="#777"/><rect x="1176.2" y="254.5" width="1.600" height="1.600" fill="#777"/><rect x="1171" y="257.5" width="1.600" height="1.600" fill="#777"/><rect x="1173.6" y="257.5" width="1.600" height="1.600" fill="#777"/><rect x="1176.2" y="257.5" width="1.600" height="1.600" fill="#777"/><path d="M1190 257l6-7 9 3.500-6 6z" stroke="#555" stroke-width="1" fill="#e2e2e2" /><path d="M1190 259l6-7 9 3.500-6 6z" stroke="#555" stroke-width="1" fill="#f6f6f6" /><path d="M1190 257.500q4 5 9 3" stroke="#555" stroke-width="1" fill="none" /><path d="M1214 247q3-2 5 0q3-1 4 2q2 3-1 4q1 3-3 3q-3 2-5-1q-3-1-1-4q-2-3 1-4z" stroke="#444" stroke-width="1" fill="#fff" stroke-dasharray="2 1"/><path d="M1220 254h8v7h-8z" stroke="#2b4f88" stroke-width="1" fill="#fff" /><path d="M1221.500 256h5M1221.500 258h5" stroke="#2b4f88" stroke-width="0.8" fill="none" /><path d="M1238.500 246.500h11v14h-11z" stroke="#555" stroke-width="1.1" fill="#f4f4f4" /><path d="M1240.500 248.500h7v3h-7z" stroke="#666" stroke-width="0.7" fill="#dcdcdc" /><rect x="1240.8" y="253.5" width="1.700" height="1.500" fill="#666"/><rect x="1243.4" y="253.5" width="1.700" height="1.500" fill="#666"/><rect x="1246" y="253.5" width="1.700" height="1.500" fill="#666"/><rect x="1240.8" y="255.9" width="1.700" height="1.500" fill="#666"/><rect x="1243.4" y="255.9" width="1.700" height="1.500" fill="#666"/><rect x="1246" y="255.9" width="1.700" height="1.500" fill="#666"/><rect x="1240.8" y="258.3" width="1.700" height="1.500" fill="#666"/><rect x="1243.4" y="258.3" width="1.700" height="1.500" fill="#666"/><rect x="1246" y="258.3" width="1.700" height="1.500" fill="#666"/><path d="M1267.500 246.500h13v13h-13z" stroke="#444" stroke-width="1.1" fill="#fff" /><text x="1270.500" y="258" font-size="12" font-weight="bold" fill="#222">?</text><path d="M653 276h9M653 279.500h7M653 283h6" stroke="#333" stroke-width="1.1" fill="none" /><path d="M656 273.500l3 2.500-3 2" stroke="#3a3a3a" stroke-width="0.8" fill="none" /><path d="M660.500 277.500h7v10h-7z" stroke="#2b4f88" stroke-width="1" fill="#eaf0f8" /><path d="M662 281h4M662 284h4" stroke="#2b4f88" stroke-width="1" fill="none" /><path d="M683 274q4.500 0 4.500 4q0 2.500-2.500 4.500v3h-4v-3q-2.500-2-2.500-4.500q0-4 4.500-4z" stroke="#6a5a1a" stroke-width="1" fill="#f7e27a" /><path d="M681.500 286.500h3" stroke="#444" stroke-width="1.5" fill="none" /><circle cx="699" cy="280" r="3.800" stroke="#6a5a1a" fill="#f7e9a0"/><path d="M699 273v2M699 285v2M692 280h2M704 280h2M694 275l1.500 1.500M702.500 283.500l1.500 1.500M704 275l-1.500 1.500M695.500 283.500l-1.500 1.500" stroke="#555" stroke-width="1" fill="none" /><path d="M710 274.500h8v7h-8z" stroke="#aaa" stroke-width="1" fill="#e4e4e4" /><path d="M712 276.500h8v7h-8z" stroke="#aaa" stroke-width="1" fill="#efefef" /><circle cx="720" cy="285" r="3" stroke="#9a9a9a" stroke-width="1.500" fill="#ccc" stroke-dasharray="1.500 1"/><path d="M728 280.500h8v6.500h-8z" stroke="#1d5fae" stroke-width="1.1" fill="#8fc2ee" /><path d="M734.500 280v-3q0-3 2.500-3t2.500 3v1.500" stroke="#1d5fae" stroke-width="1.4" fill="none" /><path d="M732 282.500v2.500" stroke="#0d3f7e" stroke-width="1.4" fill="none" /><path d="M976 280l7-3 7 3-7 3zM976 283.500l7 3 7-3M976 286.500l7 3 7-3" stroke="#1d4f8c" stroke-width="1.1" fill="none" /><path d="M976 280l7-3 7 3-7 3z" stroke="#1d4f8c" stroke-width="1" fill="#bfe0f8" /><circle cx="983" cy="275.500" r="2.800" stroke="#777" fill="#e8e8e8"/><path d="M1001 278l7-2 6 2-7 2zM1001 281.500l6 2 7-2M1001 285l6 2 7-2" stroke="#333" stroke-width="1" fill="none" /><path d="M1003 274h-5M998 274l2-2M998 274l2 2M1003 274q2 0 2 2" stroke="#111" stroke-width="1.1" fill="none" /><path d="M1022 277l7-2 6 2-7 2zM1022 280.500l6 2 7-2" stroke="#333" stroke-width="1" fill="none" /><path d="M1027.500 281.500h8v7h-8z" stroke="#2b4f88" stroke-width="1" fill="#fff" /><path d="M1029 284h5M1029 286h5" stroke="#2b4f88" stroke-width="0.8" fill="none" /><path d="M1030 273l3 2-3 2" stroke="#3a3a3a" stroke-width="0.9" fill="none" /><rect x="965" y="851" width="1" height="1" fill="#222"/><rect x="965" y="853.5" width="1" height="1" fill="#222"/><rect x="965" y="856" width="1" height="1" fill="#222"/><rect x="967.5" y="851" width="1" height="1" fill="#222"/><rect x="967.5" y="853.5" width="1" height="1" fill="#222"/><rect x="967.5" y="856" width="1" height="1" fill="#222"/><rect x="970" y="851" width="1" height="1" fill="#222"/><rect x="970" y="853.5" width="1" height="1" fill="#222"/><rect x="970" y="856" width="1" height="1" fill="#222"/><rect x="972.5" y="851" width="1" height="1" fill="#222"/><rect x="972.5" y="853.5" width="1" height="1" fill="#222"/><rect x="972.5" y="856" width="1" height="1" fill="#222"/><path d="M964 861.500h11M976 851v8" stroke="#222" stroke-width="1.3" fill="none" stroke-dasharray="3 1.500"/><path d="M984 849h15v15h-15z" stroke="#333" stroke-width="1" fill="#fff" /><path d="M987.500 849v15M991 849v15M994.500 849v15M984 852.500h15M984 856h15M984 859.500h15" stroke="#333" stroke-width="1" fill="none" /><path d="M1007.500 848v15h15" stroke="#333" stroke-width="1.3" fill="none" /><path d="M1007.500 857h6v6" stroke="#555" stroke-width="1" fill="none" /><circle cx="1035" cy="858" r="4.500" stroke="#555" stroke-width="1.200" fill="none"/><path d="M1035 858h7M1035 858l7-6.500M1040 853.500l2.500 4" stroke="#222" stroke-width="1.3" fill="none" /><path d="M1052.500 851.500h13v12h-13z" stroke="#555" stroke-width="1.1" fill="#f2f6fa" /><circle cx="1052" cy="850.500" r="1.800" stroke="#d03a1a" fill="#fff"/><path d="M1074 862l11-10M1074 862.500h11" stroke="#222" stroke-width="1.4" fill="none" /><path d="M1095.500 848v14.500h14M1094 850l1.500-2.500 1.500 2.500M1107.500 861l2.500 1.500-2.500 1.500" stroke="#1d3a5c" stroke-width="1.2" fill="none" /><path d="M1097 861l9-9" stroke="#444" stroke-width="1" fill="none" /><path d="M1106 848l-2.500 4h2.500l-2 4 5.500-5.500h-3l2-2.500z" stroke="#c87a10" stroke-width="0.4" fill="#f5a623" /><path d="M1118 856.500h10M1122.500 852v9" stroke="#111" stroke-width="1.5" fill="none" /><path d="M1125 858.500h6v3h-6z" stroke="#111" stroke-width="1.1" fill="#fff" /><path d="M1141 856.500h12M1147 850v13" stroke="#111" stroke-width="2" fill="none" /><path d="M1164.500 850.500h8v12h-8z" stroke="#111" stroke-width="1.3" fill="#fff" /><path d="M1166 853.500h2M1169.500 853.500h2M1166 856.500h2M1169.500 856.500h2M1166 859.500h2M1169.500 859.500h2" stroke="#111" stroke-width="1.3" fill="none" /><path d="M1225.500 849.500h11v11h-11z" stroke="#333" stroke-width="1" fill="#e6e6e6" /><path d="M1228 858.500v-7l5 7z" stroke="#333" stroke-width="1" fill="#fff" /><path d="M1224 863.500h14" stroke="#333" stroke-width="1.5" fill="none" /><path d="M1247.500 849.500h6v7h-6zM1254.500 849.500h6v7h-6z" stroke="#333" stroke-width="1" fill="#e6e6e6" /><path d="M1247 860h14M1247 863h14" stroke="#555" stroke-width="1.5" fill="none" /><path d="M1287 855 l5 2.500M1286.5 858 l5.500 2M1288 861 l5 1.500" stroke="#555" stroke-width="3.4" fill="none" stroke-linecap="round"/><path d="M1287 855 l5 2.500M1286.5 858 l5.500 2M1288 861 l5 1.500" stroke="#dcdcdc" stroke-width="1.8" fill="none" stroke-linecap="round"/><path d="M1293 857 q3-2 6 0q2 3 0 6.500q-3 3-7 1.500q-4-1.500-5.500-4l2-1.500 2.500 1z" stroke="#555" stroke-width="1" fill="#d6d6d6" /><path d="M1299.500 848v6M1296.500 851h6" stroke="#111" stroke-width="1.3" fill="none" /><circle cx="1314" cy="855" r="5.5" stroke="#555" stroke-width="1.300" fill="#f4f8fc"/><path d="M1318 859 l5 5" stroke="#444" stroke-width="2.6" fill="none" /><circle cx="1337" cy="857" r="7" stroke="#555" stroke-width="1.300" fill="#d8d8d8"/><circle cx="1337" cy="857" r="3" stroke="#555" fill="#f2f2f2"/><path d="M1332 852l10 10M1342 852l-10 10" stroke="#666" stroke-width="1" fill="none" /><path d="M1345.500 849.500h10v7h-10z" stroke="#1d5fae" stroke-width="1" fill="#4d8fd8" /><path d="M1347 852h3M1350 850v4" stroke="#fff" stroke-width="1" fill="none" /><path d="M1345.500 856.500h9v7h-9z" stroke="#8a6a00" stroke-width="0.8" fill="#f2c81e" /><path d="M1354 853l6.500 11h-13z" stroke="#8a6a00" stroke-width="0.8" fill="#f7d21a" /><text x="1352.800" y="863" font-size="8" font-weight="bold" fill="#111">!</text><path d="M1375.5 856 h6 l-3 3 z" stroke="#111" stroke-width="0" fill="#111" /><path d="M1388.500 849.500h13v13h-13z" stroke="#444" stroke-width="1.1" fill="#f4f4f4" /><path d="M1388.500 852h13" stroke="#444" stroke-width="1.5" fill="none" /><rect x="1420" y="855" width="2" height="2" fill="#d8d8d8"/><rect x="1416" y="859" width="2" height="2" fill="#d8d8d8"/><rect x="1420" y="859" width="2" height="2" fill="#d8d8d8"/><rect x="1412" y="863" width="2" height="2" fill="#d8d8d8"/><rect x="1416" y="863" width="2" height="2" fill="#d8d8d8"/><rect x="1420" y="863" width="2" height="2" fill="#d8d8d8"/><rect x="643" y="789" width="1" height="1" fill="#222"/><rect x="643" y="791" width="1" height="1" fill="#222"/><rect x="645" y="789" width="1" height="1" fill="#222"/><rect x="645" y="791" width="1" height="1" fill="#222"/><rect x="647" y="789" width="1" height="1" fill="#222"/><rect x="647" y="791" width="1" height="1" fill="#222"/><rect x="649" y="789" width="1" height="1" fill="#222"/><rect x="649" y="791" width="1" height="1" fill="#222"/><rect x="651" y="789" width="1" height="1" fill="#222"/><rect x="651" y="791" width="1" height="1" fill="#222"/><rect x="653" y="789" width="1" height="1" fill="#222"/><rect x="653" y="791" width="1" height="1" fill="#222"/></g></svg><div class="t" style="left:739px;top:766px;color:#fff;">模型</div><div class="t" style="left:778px;top:766px;"><span class="m" style="letter-spacing:-1.20px">Layout</span><span class="d" style="letter-spacing:-0.67px">1</span></div>
<!-- ime -->
<div class="a" style="left:1236px;top:731px;width:158px;height:28px;background:#fff;box-shadow:0 0 2px rgba(0,0,0,.35)"></div>
<svg style="left:1236px;top:731px" width="158" height="28" viewBox="1236 731 158 28"><ellipse cx="1250" cy="749" rx="5.500" ry="4.200" fill="#3d84f0"/><ellipse cx="1243.5" cy="744.5" rx="1.9" ry="2.28" fill="#3d84f0"/><ellipse cx="1247.5" cy="740.5" rx="2" ry="2.4" fill="#3d84f0"/><ellipse cx="1252.5" cy="740.5" rx="2" ry="2.4" fill="#3d84f0"/><ellipse cx="1256.5" cy="744.5" rx="1.9" ry="2.28" fill="#3d84f0"/><circle cx="1297.500" cy="741" r="2" stroke="#3d84f0" stroke-width="1.500" fill="none"/><path d="M1305.500 746.500q2 0 1.500 2.500t-3 4" stroke="#3d84f0" stroke-width="2" fill="none"/><circle cx="1305.800" cy="747" r="1.600" fill="#3d84f0"/><rect x="1321" y="741.500" width="14.500" height="10.500" rx="1.500" stroke="#3d84f0" stroke-width="1.700" fill="none"/><path d="M1325 741v-2.500h6.500v2.500M1321 746.500h14.500M1328.200 745v3" stroke="#3d84f0" stroke-width="1.700" fill="none"/><circle cx="1354" cy="742.500" r="3.500" stroke="#c9d8f4" stroke-width="1.600" fill="none"/><path d="M1347.500 753q1-6.500 6.500-6.500t6.500 6.500" stroke="#c9d8f4" stroke-width="1.600" fill="none"/><rect x="1373.5" y="739" width="5" height="5" rx="1" stroke="#3d84f0" stroke-width="1.700" fill="none"/><rect x="1381.5" y="739" width="5" height="5" rx="1" stroke="#3d84f0" stroke-width="1.700" fill="none"/><rect x="1373.5" y="747" width="5" height="5" rx="1" stroke="#3d84f0" stroke-width="1.700" fill="none"/><rect x="1381.5" y="747" width="5" height="5" rx="1" stroke="#3d84f0" stroke-width="1.700" fill="none"/></svg>
<div class="t" style="left:1268px;top:735px;font-size:16px;line-height:20px;font-weight:bold;color:#3d84f0">中</div>
</body>
</html>
